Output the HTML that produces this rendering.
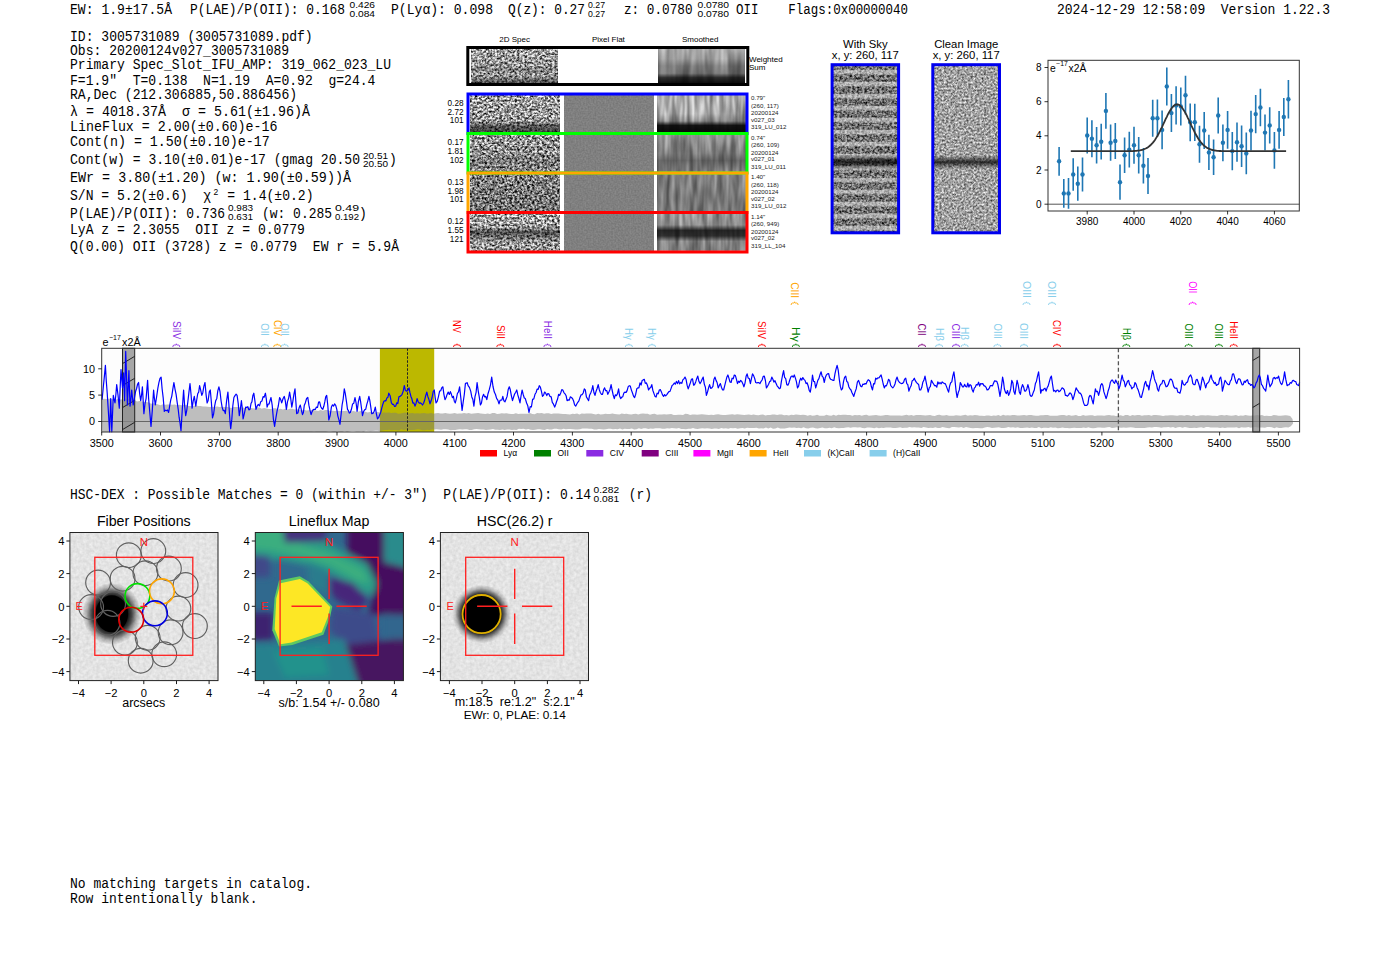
<!DOCTYPE html><html><head><meta charset="utf-8"><style>html,body{margin:0;padding:0;background:#fff;}svg{display:block}</style></head><body>
<svg width="1400" height="953" viewBox="0 0 1400 953">
<rect width="1400" height="953" fill="#fff"/>
<defs><filter id="nf0" x="0" y="0" width="1" height="1" color-interpolation-filters="sRGB"><feTurbulence type="fractalNoise" baseFrequency="0.4 0.45" numOctaves="3" seed="11"/><feColorMatrix type="matrix" values="1.8 0 0 0 -0.26 1.8 0 0 0 -0.26 1.8 0 0 0 -0.26 0 0 0 0 1"/></filter><linearGradient id="g0" x1="0" y1="0" x2="0" y2="1"><stop offset="0" stop-color="#000" stop-opacity="0"/><stop offset="0.5" stop-color="#000" stop-opacity="0.1"/><stop offset="0.6" stop-color="#000" stop-opacity="0.25"/><stop offset="0.75" stop-color="#000" stop-opacity="0.05"/><stop offset="0.85" stop-color="#000" stop-opacity="0.3"/><stop offset="1" stop-color="#000" stop-opacity="0.6"/></linearGradient><filter id="nf1" x="0" y="0" width="1" height="1" color-interpolation-filters="sRGB"><feTurbulence type="fractalNoise" baseFrequency="0.15 0.02" numOctaves="2" seed="5"/><feColorMatrix type="matrix" values="0.7 0 0 0 0.35 0.7 0 0 0 0.35 0.7 0 0 0 0.35 0 0 0 0 1"/></filter><linearGradient id="g1" x1="0" y1="0" x2="0" y2="1"><stop offset="0" stop-color="#000" stop-opacity="0.05"/><stop offset="0.3" stop-color="#000" stop-opacity="0.15"/><stop offset="0.5" stop-color="#000" stop-opacity="0.35"/><stop offset="0.7" stop-color="#000" stop-opacity="0.4"/><stop offset="0.82" stop-color="#000" stop-opacity="0.8"/><stop offset="1" stop-color="#000" stop-opacity="0.95"/></linearGradient><filter id="nf2" x="0" y="0" width="1" height="1" color-interpolation-filters="sRGB"><feTurbulence type="fractalNoise" baseFrequency="0.4 0.45" numOctaves="3" seed="20"/><feColorMatrix type="matrix" values="1.9 0 0 0 -0.33 1.9 0 0 0 -0.33 1.9 0 0 0 -0.33 0 0 0 0 1"/></filter><linearGradient id="g2" x1="0" y1="0" x2="0" y2="1"><stop offset="0" stop-color="#000" stop-opacity="0"/><stop offset="0.7" stop-color="#000" stop-opacity="0.05"/><stop offset="0.85" stop-color="#000" stop-opacity="0.5"/><stop offset="1" stop-color="#000" stop-opacity="0.6"/></linearGradient><filter id="nf3" x="0" y="0" width="1" height="1" color-interpolation-filters="sRGB"><feTurbulence type="fractalNoise" baseFrequency="0.6" numOctaves="1" seed="30"/><feColorMatrix type="matrix" values="0.15 0 0 0 0.425 0.15 0 0 0 0.425 0.15 0 0 0 0.425 0 0 0 0 1"/></filter><filter id="nf4" x="0" y="0" width="1" height="1" color-interpolation-filters="sRGB"><feTurbulence type="fractalNoise" baseFrequency="0.2 0.03" numOctaves="2" seed="40"/><feColorMatrix type="matrix" values="0.75 0 0 0 0.305 0.75 0 0 0 0.305 0.75 0 0 0 0.305 0 0 0 0 1"/></filter><linearGradient id="g3" x1="0" y1="0" x2="0" y2="1"><stop offset="0" stop-color="#000" stop-opacity="0.0"/><stop offset="0.5" stop-color="#000" stop-opacity="0.05"/><stop offset="0.7" stop-color="#000" stop-opacity="0.25"/><stop offset="0.82" stop-color="#000" stop-opacity="0.9"/><stop offset="1" stop-color="#000" stop-opacity="0.95"/></linearGradient><filter id="nf5" x="0" y="0" width="1" height="1" color-interpolation-filters="sRGB"><feTurbulence type="fractalNoise" baseFrequency="0.4 0.45" numOctaves="3" seed="21"/><feColorMatrix type="matrix" values="1.9 0 0 0 -0.37 1.9 0 0 0 -0.37 1.9 0 0 0 -0.37 0 0 0 0 1"/></filter><linearGradient id="g4" x1="0" y1="0" x2="0" y2="1"><stop offset="0" stop-color="#000" stop-opacity="0"/><stop offset="0.5" stop-color="#000" stop-opacity="0.05"/><stop offset="0.7" stop-color="#000" stop-opacity="0.2"/><stop offset="1" stop-color="#000" stop-opacity="0.1"/></linearGradient><filter id="nf6" x="0" y="0" width="1" height="1" color-interpolation-filters="sRGB"><feTurbulence type="fractalNoise" baseFrequency="0.6" numOctaves="1" seed="31"/><feColorMatrix type="matrix" values="0.15 0 0 0 0.425 0.15 0 0 0 0.425 0.15 0 0 0 0.425 0 0 0 0 1"/></filter><filter id="nf7" x="0" y="0" width="1" height="1" color-interpolation-filters="sRGB"><feTurbulence type="fractalNoise" baseFrequency="0.2 0.03" numOctaves="2" seed="41"/><feColorMatrix type="matrix" values="0.75 0 0 0 0.305 0.75 0 0 0 0.305 0.75 0 0 0 0.305 0 0 0 0 1"/></filter><linearGradient id="g5" x1="0" y1="0" x2="0" y2="1"><stop offset="0" stop-color="#000" stop-opacity="0.15"/><stop offset="0.5" stop-color="#000" stop-opacity="0.3"/><stop offset="0.7" stop-color="#000" stop-opacity="0.45"/><stop offset="1" stop-color="#000" stop-opacity="0.3"/></linearGradient><filter id="nf8" x="0" y="0" width="1" height="1" color-interpolation-filters="sRGB"><feTurbulence type="fractalNoise" baseFrequency="0.4 0.45" numOctaves="3" seed="22"/><feColorMatrix type="matrix" values="1.9 0 0 0 -0.4 1.9 0 0 0 -0.4 1.9 0 0 0 -0.4 0 0 0 0 1"/></filter><linearGradient id="g6" x1="0" y1="0" x2="0" y2="1"><stop offset="0" stop-color="#000" stop-opacity="0.1"/><stop offset="0.5" stop-color="#000" stop-opacity="0.15"/><stop offset="1" stop-color="#000" stop-opacity="0.2"/></linearGradient><filter id="nf9" x="0" y="0" width="1" height="1" color-interpolation-filters="sRGB"><feTurbulence type="fractalNoise" baseFrequency="0.6" numOctaves="1" seed="32"/><feColorMatrix type="matrix" values="0.15 0 0 0 0.425 0.15 0 0 0 0.425 0.15 0 0 0 0.425 0 0 0 0 1"/></filter><filter id="nf10" x="0" y="0" width="1" height="1" color-interpolation-filters="sRGB"><feTurbulence type="fractalNoise" baseFrequency="0.2 0.03" numOctaves="2" seed="42"/><feColorMatrix type="matrix" values="0.75 0 0 0 0.305 0.75 0 0 0 0.305 0.75 0 0 0 0.305 0 0 0 0 1"/></filter><linearGradient id="g7" x1="0" y1="0" x2="0" y2="1"><stop offset="0" stop-color="#000" stop-opacity="0.25"/><stop offset="0.5" stop-color="#000" stop-opacity="0.3"/><stop offset="1" stop-color="#000" stop-opacity="0.35"/></linearGradient><filter id="nf11" x="0" y="0" width="1" height="1" color-interpolation-filters="sRGB"><feTurbulence type="fractalNoise" baseFrequency="0.4 0.45" numOctaves="3" seed="23"/><feColorMatrix type="matrix" values="1.9 0 0 0 -0.31 1.9 0 0 0 -0.31 1.9 0 0 0 -0.31 0 0 0 0 1"/></filter><linearGradient id="g8" x1="0" y1="0" x2="0" y2="1"><stop offset="0" stop-color="#000" stop-opacity="0"/><stop offset="0.35" stop-color="#000" stop-opacity="0.05"/><stop offset="0.5" stop-color="#000" stop-opacity="0.55"/><stop offset="0.65" stop-color="#000" stop-opacity="0.3"/><stop offset="0.8" stop-color="#000" stop-opacity="0.05"/><stop offset="1" stop-color="#000" stop-opacity="0.1"/></linearGradient><filter id="nf12" x="0" y="0" width="1" height="1" color-interpolation-filters="sRGB"><feTurbulence type="fractalNoise" baseFrequency="0.6" numOctaves="1" seed="33"/><feColorMatrix type="matrix" values="0.15 0 0 0 0.425 0.15 0 0 0 0.425 0.15 0 0 0 0.425 0 0 0 0 1"/></filter><filter id="nf13" x="0" y="0" width="1" height="1" color-interpolation-filters="sRGB"><feTurbulence type="fractalNoise" baseFrequency="0.2 0.03" numOctaves="2" seed="43"/><feColorMatrix type="matrix" values="0.75 0 0 0 0.305 0.75 0 0 0 0.305 0.75 0 0 0 0.305 0 0 0 0 1"/></filter><linearGradient id="g9" x1="0" y1="0" x2="0" y2="1"><stop offset="0" stop-color="#000" stop-opacity="0.15"/><stop offset="0.3" stop-color="#000" stop-opacity="0.2"/><stop offset="0.45" stop-color="#000" stop-opacity="0.8"/><stop offset="0.6" stop-color="#000" stop-opacity="0.75"/><stop offset="0.75" stop-color="#000" stop-opacity="0.25"/><stop offset="1" stop-color="#000" stop-opacity="0.3"/></linearGradient><filter id="nf14" x="0" y="0" width="1" height="1" color-interpolation-filters="sRGB"><feTurbulence type="fractalNoise" baseFrequency="0.4 0.45" numOctaves="3" seed="51"/><feColorMatrix type="matrix" values="1.8 0 0 0 -0.26 1.8 0 0 0 -0.26 1.8 0 0 0 -0.26 0 0 0 0 1"/></filter><pattern id="stripes" x="0" y="57.75" width="66" height="12" patternUnits="userSpaceOnUse"><rect width="66" height="12" fill="#000" fill-opacity="0.32"/><rect y="0" width="66" height="4.5" fill="#fff" fill-opacity="0.45"/></pattern><linearGradient id="g10" x1="0" y1="0" x2="0" y2="1"><stop offset="0" stop-color="#000" stop-opacity="0"/><stop offset="0.535" stop-color="#000" stop-opacity="0"/><stop offset="0.58" stop-color="#000" stop-opacity="0.75"/><stop offset="0.625" stop-color="#000" stop-opacity="0"/><stop offset="1" stop-color="#000" stop-opacity="0"/></linearGradient><filter id="nf15" x="0" y="0" width="1" height="1" color-interpolation-filters="sRGB"><feTurbulence type="fractalNoise" baseFrequency="0.45 0.5" numOctaves="3" seed="52"/><feColorMatrix type="matrix" values="1.05 0 0 0 0.105 1.05 0 0 0 0.105 1.05 0 0 0 0.105 0 0 0 0 1"/></filter><linearGradient id="g11" x1="0" y1="0" x2="0" y2="1"><stop offset="0" stop-color="#000" stop-opacity="0"/><stop offset="0.54" stop-color="#000" stop-opacity="0"/><stop offset="0.58" stop-color="#000" stop-opacity="0.75"/><stop offset="0.62" stop-color="#000" stop-opacity="0"/><stop offset="1" stop-color="#000" stop-opacity="0"/></linearGradient><clipPath id="ax0"><rect x="69.9" y="532.5" width="148.1" height="148.1"/></clipPath><clipPath id="ax1"><rect x="255.3" y="532.5" width="148.1" height="148.1"/></clipPath><clipPath id="ax2"><rect x="440.4" y="532.5" width="148.1" height="148.1"/></clipPath><filter id="blur3" x="-50%" y="-50%" width="200%" height="200%"><feGaussianBlur stdDeviation="3"/></filter><filter id="blur6" x="-50%" y="-50%" width="200%" height="200%"><feGaussianBlur stdDeviation="6"/></filter><filter id="blur9" x="-50%" y="-50%" width="200%" height="200%"><feGaussianBlur stdDeviation="9"/></filter><radialGradient id="blob"><stop offset="0" stop-color="#000"/><stop offset="0.55" stop-color="#000"/><stop offset="0.7" stop-color="#000" stop-opacity="0.75"/><stop offset="0.85" stop-color="#000" stop-opacity="0.25"/><stop offset="1" stop-color="#000" stop-opacity="0"/></radialGradient><radialGradient id="halo1"><stop offset="0" stop-color="#000"/><stop offset="0.5" stop-color="#000"/><stop offset="0.68" stop-color="#000" stop-opacity="0.7"/><stop offset="0.85" stop-color="#000" stop-opacity="0.25"/><stop offset="1" stop-color="#000" stop-opacity="0"/></radialGradient><filter id="nf16" x="0" y="0" width="1" height="1" color-interpolation-filters="sRGB"><feTurbulence type="fractalNoise" baseFrequency="0.3" numOctaves="2" seed="61"/><feColorMatrix type="matrix" values="0.14 0 0 0 0.82 0.14 0 0 0 0.82 0.14 0 0 0 0.82 0 0 0 0 1"/></filter><radialGradient id="halo3"><stop offset="0" stop-color="#000"/><stop offset="0.62" stop-color="#000"/><stop offset="0.75" stop-color="#000" stop-opacity="0.6"/><stop offset="0.88" stop-color="#000" stop-opacity="0.2"/><stop offset="1" stop-color="#000" stop-opacity="0"/></radialGradient><filter id="nf17" x="0" y="0" width="1" height="1" color-interpolation-filters="sRGB"><feTurbulence type="fractalNoise" baseFrequency="0.3" numOctaves="2" seed="62"/><feColorMatrix type="matrix" values="0.14 0 0 0 0.82 0.14 0 0 0 0.82 0.14 0 0 0 0.82 0 0 0 0 1"/></filter></defs>
<text xml:space="preserve" x="70" y="14" font-family='"Liberation Mono", monospace' font-size="13.8" fill="#000" textLength="102" lengthAdjust="spacingAndGlyphs">EW: 1.9±17.5Å</text>
<text xml:space="preserve" x="190" y="14" font-family='"Liberation Mono", monospace' font-size="13.8" fill="#000" textLength="155" lengthAdjust="spacingAndGlyphs">P(LAE)/P(OII): 0.168</text>
<text xml:space="preserve" x="349.5" y="8.3" font-family='"Liberation Sans", sans-serif' font-size="8.5" fill="#000" textLength="25.5" lengthAdjust="spacingAndGlyphs" >0.426</text>
<text xml:space="preserve" x="349.5" y="17.2" font-family='"Liberation Sans", sans-serif' font-size="8.5" fill="#000" textLength="25.5" lengthAdjust="spacingAndGlyphs" >0.084</text>
<text xml:space="preserve" x="391" y="14" font-family='"Liberation Mono", monospace' font-size="13.8" fill="#000" textLength="102" lengthAdjust="spacingAndGlyphs">P(Lyα): 0.098</text>
<text xml:space="preserve" x="508" y="14" font-family='"Liberation Mono", monospace' font-size="13.8" fill="#000" textLength="77" lengthAdjust="spacingAndGlyphs">Q(z): 0.27</text>
<text xml:space="preserve" x="588" y="8.3" font-family='"Liberation Sans", sans-serif' font-size="8.5" fill="#000" textLength="17" lengthAdjust="spacingAndGlyphs" >0.27</text>
<text xml:space="preserve" x="588" y="17.2" font-family='"Liberation Sans", sans-serif' font-size="8.5" fill="#000" textLength="17" lengthAdjust="spacingAndGlyphs" >0.27</text>
<text xml:space="preserve" x="624" y="14" font-family='"Liberation Mono", monospace' font-size="13.8" fill="#000" textLength="68.5" lengthAdjust="spacingAndGlyphs">z: 0.0780</text>
<text xml:space="preserve" x="697.5" y="8.3" font-family='"Liberation Sans", sans-serif' font-size="8.5" fill="#000" textLength="31.5" lengthAdjust="spacingAndGlyphs" >0.0780</text>
<text xml:space="preserve" x="697.5" y="17.2" font-family='"Liberation Sans", sans-serif' font-size="8.5" fill="#000" textLength="31.5" lengthAdjust="spacingAndGlyphs" >0.0780</text>
<text xml:space="preserve" x="736" y="14" font-family='"Liberation Mono", monospace' font-size="13.8" fill="#000" textLength="172" lengthAdjust="spacingAndGlyphs">OII    Flags:0x00000040</text>
<text xml:space="preserve" x="1057" y="14" font-family='"Liberation Mono", monospace' font-size="13.8" fill="#000" textLength="273" lengthAdjust="spacingAndGlyphs">2024-12-29 12:58:09  Version 1.22.3</text>
<text xml:space="preserve" x="70" y="40.5" font-family='"Liberation Mono", monospace' font-size="13.8" fill="#000" textLength="242.7" lengthAdjust="spacingAndGlyphs">ID: 3005731089 (3005731089.pdf)</text>
<text xml:space="preserve" x="70" y="54.7" font-family='"Liberation Mono", monospace' font-size="13.8" fill="#000" textLength="219.2" lengthAdjust="spacingAndGlyphs">Obs: 20200124v027_3005731089</text>
<text xml:space="preserve" x="70" y="69.3" font-family='"Liberation Mono", monospace' font-size="13.8" fill="#000" textLength="321.0" lengthAdjust="spacingAndGlyphs">Primary Spec_Slot_IFU_AMP: 319_062_023_LU</text>
<text xml:space="preserve" x="70" y="84.5" font-family='"Liberation Mono", monospace' font-size="13.8" fill="#000" textLength="305.4" lengthAdjust="spacingAndGlyphs">F=1.9"  T=0.138  N=1.19  A=0.92  g=24.4</text>
<text xml:space="preserve" x="70" y="99.0" font-family='"Liberation Mono", monospace' font-size="13.8" fill="#000" textLength="227.1" lengthAdjust="spacingAndGlyphs">RA,Dec (212.306885,50.886456)</text>
<text xml:space="preserve" x="70" y="131.4" font-family='"Liberation Mono", monospace' font-size="13.8" fill="#000" textLength="207.5" lengthAdjust="spacingAndGlyphs">LineFlux = 2.00(±0.60)e-16</text>
<text xml:space="preserve" x="70" y="146.3" font-family='"Liberation Mono", monospace' font-size="13.8" fill="#000" textLength="199.7" lengthAdjust="spacingAndGlyphs">Cont(n) = 1.50(±0.10)e-17</text>
<text xml:space="preserve" x="70" y="234.2" font-family='"Liberation Mono", monospace' font-size="13.8" fill="#000" textLength="234.9" lengthAdjust="spacingAndGlyphs">LyA z = 2.3055  OII z = 0.0779</text>
<text xml:space="preserve" x="70" y="116.3" font-family='"Liberation Mono", monospace' font-size="13.8" fill="#000" textLength="240" lengthAdjust="spacingAndGlyphs">λ = 4018.37Å  σ = 5.61(±1.96)Å</text>
<text xml:space="preserve" x="70" y="164.3" font-family='"Liberation Mono", monospace' font-size="13.8" fill="#000" textLength="290" lengthAdjust="spacingAndGlyphs">Cont(w) = 3.10(±0.01)e-17 (gmag 20.50</text>
<text xml:space="preserve" x="363" y="158.5" font-family='"Liberation Sans", sans-serif' font-size="8.5" fill="#000" textLength="25" lengthAdjust="spacingAndGlyphs" >20.51</text>
<text xml:space="preserve" x="363" y="167.3" font-family='"Liberation Sans", sans-serif' font-size="8.5" fill="#000" textLength="25" lengthAdjust="spacingAndGlyphs" >20.50</text>
<text xml:space="preserve" x="389" y="164.3" font-family='"Liberation Mono", monospace' font-size="13.8" fill="#000" textLength="7.8" lengthAdjust="spacingAndGlyphs">)</text>
<text xml:space="preserve" x="70" y="182.3" font-family='"Liberation Mono", monospace' font-size="13.8" fill="#000" textLength="281" lengthAdjust="spacingAndGlyphs">EWr = 3.80(±1.20) (w: 1.90(±0.59))Å</text>
<text xml:space="preserve" x="70" y="199.8" font-family='"Liberation Mono", monospace' font-size="13.8" fill="#000" textLength="141" lengthAdjust="spacingAndGlyphs">S/N = 5.2(±0.6)  χ</text>
<text xml:space="preserve" x="213.5" y="194.5" font-family='"Liberation Sans", sans-serif' font-size="8.5" fill="#000" >2</text>
<text xml:space="preserve" x="219.5" y="199.8" font-family='"Liberation Mono", monospace' font-size="13.8" fill="#000" textLength="94" lengthAdjust="spacingAndGlyphs"> = 1.4(±0.2)</text>
<text xml:space="preserve" x="70" y="217.5" font-family='"Liberation Mono", monospace' font-size="13.8" fill="#000" textLength="155" lengthAdjust="spacingAndGlyphs">P(LAE)/P(OII): 0.736</text>
<text xml:space="preserve" x="228" y="211.3" font-family='"Liberation Sans", sans-serif' font-size="8.5" fill="#000" textLength="25" lengthAdjust="spacingAndGlyphs" >0.983</text>
<text xml:space="preserve" x="228" y="220.2" font-family='"Liberation Sans", sans-serif' font-size="8.5" fill="#000" textLength="25" lengthAdjust="spacingAndGlyphs" >0.631</text>
<text xml:space="preserve" x="262" y="217.5" font-family='"Liberation Mono", monospace' font-size="13.8" fill="#000" textLength="70" lengthAdjust="spacingAndGlyphs">(w: 0.285</text>
<text xml:space="preserve" x="335" y="211.3" font-family='"Liberation Sans", sans-serif' font-size="8.5" fill="#000" textLength="24" lengthAdjust="spacingAndGlyphs" >0.49</text>
<text xml:space="preserve" x="335" y="220.2" font-family='"Liberation Sans", sans-serif' font-size="8.5" fill="#000" textLength="24" lengthAdjust="spacingAndGlyphs" >0.192</text>
<text xml:space="preserve" x="359" y="217.5" font-family='"Liberation Mono", monospace' font-size="13.8" fill="#000" textLength="7.8" lengthAdjust="spacingAndGlyphs">)</text>
<text xml:space="preserve" x="70" y="251.2" font-family='"Liberation Mono", monospace' font-size="13.8" fill="#000" textLength="329" lengthAdjust="spacingAndGlyphs">Q(0.00) OII (3728) z = 0.0779  EW r = 5.9Å</text>
<text xml:space="preserve" x="514.6" y="42" font-family='"Liberation Sans", sans-serif' font-size="8" fill="#000" text-anchor="middle" >2D Spec</text>
<text xml:space="preserve" x="608.4" y="42" font-family='"Liberation Sans", sans-serif' font-size="8" fill="#000" text-anchor="middle" >Pixel Flat</text>
<text xml:space="preserve" x="700.2" y="42" font-family='"Liberation Sans", sans-serif' font-size="8" fill="#000" text-anchor="middle" >Smoothed</text>
<rect x="468" y="47.8" width="279" height="36.4" fill="#fff"/>
<rect x="471.5" y="47.8" width="86.5" height="36.4" fill="#888" filter="url(#nf0)"/>
<rect x="471.5" y="47.8" width="86.5" height="36.4" fill="url(#g0)"/>
<rect x="658" y="47.8" width="87" height="36.4" fill="#888" filter="url(#nf1)"/>
<rect x="658" y="47.8" width="87" height="36.4" fill="url(#g1)"/>
<rect x="467.8" y="47.5" width="280" height="37" fill="none" stroke="#000" stroke-width="3"/>
<text xml:space="preserve" x="749" y="61.5" font-family='"Liberation Sans", sans-serif' font-size="8" fill="#000" >Weighted</text>
<text xml:space="preserve" x="749" y="69.5" font-family='"Liberation Sans", sans-serif' font-size="8" fill="#000" >Sum</text>
<rect x="467" y="94.0" width="281" height="39.5" fill="#fff"/>
<rect x="470" y="95.5" width="90" height="36.5" fill="#888" filter="url(#nf2)"/>
<rect x="470" y="95.5" width="90" height="36.5" fill="url(#g2)"/>
<rect x="564" y="95.5" width="90" height="36.5" fill="#888" filter="url(#nf3)"/>
<rect x="657" y="95.5" width="89" height="36.5" fill="#888" filter="url(#nf4)"/>
<rect x="657" y="95.5" width="89" height="36.5" fill="url(#g3)"/>
<text xml:space="preserve" x="463.5" y="105.8" font-family='"Liberation Sans", sans-serif' font-size="8.2" fill="#000" text-anchor="end" >0.28</text>
<text xml:space="preserve" x="463.5" y="114.5" font-family='"Liberation Sans", sans-serif' font-size="8.2" fill="#000" text-anchor="end" >2.72</text>
<text xml:space="preserve" x="463.5" y="123.19999999999999" font-family='"Liberation Sans", sans-serif' font-size="8.2" fill="#000" text-anchor="end" >101</text>
<text xml:space="preserve" x="751" y="100.0" font-family='"Liberation Sans", sans-serif' font-size="6.2" fill="#222" >0.79"</text>
<text xml:space="preserve" x="751" y="107.5" font-family='"Liberation Sans", sans-serif' font-size="6.2" fill="#222" >(260, 117)</text>
<text xml:space="preserve" x="751" y="115.0" font-family='"Liberation Sans", sans-serif' font-size="6.2" fill="#222" >20200124</text>
<text xml:space="preserve" x="751" y="121.5" font-family='"Liberation Sans", sans-serif' font-size="6.2" fill="#222" >v027_03</text>
<text xml:space="preserve" x="751" y="129.0" font-family='"Liberation Sans", sans-serif' font-size="6.2" fill="#222" >319_LU_012</text>
<rect x="467" y="133.5" width="281" height="39.5" fill="#fff"/>
<rect x="470" y="135.0" width="90" height="36.5" fill="#888" filter="url(#nf5)"/>
<rect x="470" y="135.0" width="90" height="36.5" fill="url(#g4)"/>
<rect x="564" y="135.0" width="90" height="36.5" fill="#888" filter="url(#nf6)"/>
<rect x="657" y="135.0" width="89" height="36.5" fill="#888" filter="url(#nf7)"/>
<rect x="657" y="135.0" width="89" height="36.5" fill="url(#g5)"/>
<text xml:space="preserve" x="463.5" y="145.3" font-family='"Liberation Sans", sans-serif' font-size="8.2" fill="#000" text-anchor="end" >0.17</text>
<text xml:space="preserve" x="463.5" y="154.0" font-family='"Liberation Sans", sans-serif' font-size="8.2" fill="#000" text-anchor="end" >1.81</text>
<text xml:space="preserve" x="463.5" y="162.70000000000002" font-family='"Liberation Sans", sans-serif' font-size="8.2" fill="#000" text-anchor="end" >102</text>
<text xml:space="preserve" x="751" y="139.5" font-family='"Liberation Sans", sans-serif' font-size="6.2" fill="#222" >0.74"</text>
<text xml:space="preserve" x="751" y="147.0" font-family='"Liberation Sans", sans-serif' font-size="6.2" fill="#222" >(260, 109)</text>
<text xml:space="preserve" x="751" y="154.5" font-family='"Liberation Sans", sans-serif' font-size="6.2" fill="#222" >20200124</text>
<text xml:space="preserve" x="751" y="161.0" font-family='"Liberation Sans", sans-serif' font-size="6.2" fill="#222" >v027_01</text>
<text xml:space="preserve" x="751" y="168.5" font-family='"Liberation Sans", sans-serif' font-size="6.2" fill="#222" >319_LU_011</text>
<rect x="467" y="173.0" width="281" height="39.5" fill="#fff"/>
<rect x="470" y="174.5" width="90" height="36.5" fill="#888" filter="url(#nf8)"/>
<rect x="470" y="174.5" width="90" height="36.5" fill="url(#g6)"/>
<rect x="564" y="174.5" width="90" height="36.5" fill="#888" filter="url(#nf9)"/>
<rect x="657" y="174.5" width="89" height="36.5" fill="#888" filter="url(#nf10)"/>
<rect x="657" y="174.5" width="89" height="36.5" fill="url(#g7)"/>
<text xml:space="preserve" x="463.5" y="184.8" font-family='"Liberation Sans", sans-serif' font-size="8.2" fill="#000" text-anchor="end" >0.13</text>
<text xml:space="preserve" x="463.5" y="193.5" font-family='"Liberation Sans", sans-serif' font-size="8.2" fill="#000" text-anchor="end" >1.98</text>
<text xml:space="preserve" x="463.5" y="202.20000000000002" font-family='"Liberation Sans", sans-serif' font-size="8.2" fill="#000" text-anchor="end" >101</text>
<text xml:space="preserve" x="751" y="179.0" font-family='"Liberation Sans", sans-serif' font-size="6.2" fill="#222" >1.40"</text>
<text xml:space="preserve" x="751" y="186.5" font-family='"Liberation Sans", sans-serif' font-size="6.2" fill="#222" >(260, 118)</text>
<text xml:space="preserve" x="751" y="194.0" font-family='"Liberation Sans", sans-serif' font-size="6.2" fill="#222" >20200124</text>
<text xml:space="preserve" x="751" y="200.5" font-family='"Liberation Sans", sans-serif' font-size="6.2" fill="#222" >v027_02</text>
<text xml:space="preserve" x="751" y="208.0" font-family='"Liberation Sans", sans-serif' font-size="6.2" fill="#222" >319_LU_012</text>
<rect x="467" y="212.5" width="281" height="39.5" fill="#fff"/>
<rect x="470" y="214.0" width="90" height="36.5" fill="#888" filter="url(#nf11)"/>
<rect x="470" y="214.0" width="90" height="36.5" fill="url(#g8)"/>
<rect x="564" y="214.0" width="90" height="36.5" fill="#888" filter="url(#nf12)"/>
<rect x="657" y="214.0" width="89" height="36.5" fill="#888" filter="url(#nf13)"/>
<rect x="657" y="214.0" width="89" height="36.5" fill="url(#g9)"/>
<text xml:space="preserve" x="463.5" y="224.3" font-family='"Liberation Sans", sans-serif' font-size="8.2" fill="#000" text-anchor="end" >0.12</text>
<text xml:space="preserve" x="463.5" y="233.0" font-family='"Liberation Sans", sans-serif' font-size="8.2" fill="#000" text-anchor="end" >1.55</text>
<text xml:space="preserve" x="463.5" y="241.70000000000002" font-family='"Liberation Sans", sans-serif' font-size="8.2" fill="#000" text-anchor="end" >121</text>
<text xml:space="preserve" x="751" y="218.5" font-family='"Liberation Sans", sans-serif' font-size="6.2" fill="#222" >1.14"</text>
<text xml:space="preserve" x="751" y="226.0" font-family='"Liberation Sans", sans-serif' font-size="6.2" fill="#222" >(260, 949)</text>
<text xml:space="preserve" x="751" y="233.5" font-family='"Liberation Sans", sans-serif' font-size="6.2" fill="#222" >20200124</text>
<text xml:space="preserve" x="751" y="240.0" font-family='"Liberation Sans", sans-serif' font-size="6.2" fill="#222" >v027_02</text>
<text xml:space="preserve" x="751" y="247.5" font-family='"Liberation Sans", sans-serif' font-size="6.2" fill="#222" >319_LL_104</text>
<rect x="468" y="94.0" width="279" height="39.5" fill="none" stroke="#0000ff" stroke-width="3"/>
<rect x="468" y="133.5" width="279" height="39.5" fill="none" stroke="#00ff00" stroke-width="3"/>
<rect x="468" y="173.0" width="279" height="39.5" fill="none" stroke="#ffa500" stroke-width="3"/>
<rect x="468" y="212.5" width="279" height="39.5" fill="none" stroke="#ff0000" stroke-width="3"/>
<text xml:space="preserve" x="865.3" y="47.6" font-family='"Liberation Sans", sans-serif' font-size="11.3" fill="#000" text-anchor="middle" >With Sky</text>
<text xml:space="preserve" x="865.3" y="58.5" font-family='"Liberation Sans", sans-serif' font-size="11.3" fill="#000" text-anchor="middle" >x, y: 260, 117</text>
<text xml:space="preserve" x="966.2" y="47.6" font-family='"Liberation Sans", sans-serif' font-size="11.3" fill="#000" text-anchor="middle" >Clean Image</text>
<text xml:space="preserve" x="966.2" y="58.5" font-family='"Liberation Sans", sans-serif' font-size="11.3" fill="#000" text-anchor="middle" >x, y: 260, 117</text>
<rect x="832" y="64.7" width="66.5" height="168" fill="#888" filter="url(#nf14)"/>
<rect x="832" y="64.7" width="66.5" height="168" fill="url(#stripes)"/>
<rect x="832" y="64.7" width="66.5" height="168" fill="url(#g10)"/>
<rect x="832.1" y="64.7" width="66.5" height="168.1" fill="none" stroke="#0000ee" stroke-width="3"/>
<rect x="933" y="64.7" width="66.5" height="168" fill="#888" filter="url(#nf15)"/>
<rect x="933" y="64.7" width="66.5" height="168" fill="url(#g11)"/>
<rect x="932.8" y="64.7" width="66.7" height="168.1" fill="none" stroke="#0000ee" stroke-width="3"/>
<rect x="1048" y="60.3" width="251.29999999999995" height="150.7" fill="#fff"/>
<line x1="1048" y1="204.2" x2="1299.3" y2="204.2" stroke="#555" stroke-width="1"/>
<path d="M1059.1 146.9V175.7M1063.8 179.1V207.8M1068.5 178.1V208.8M1073.2 158.2V190.7M1077.8 166.6V200.8M1082.5 157.4V191.6M1087.2 117.6V153.4M1091.9 120.3V157.2M1096.6 127.1V163.4M1101.2 123.7V159.6M1105.9 93.1V128.7M1110.6 124.6V160.8M1115.3 123.0V158.9M1120.0 164.6V199.8M1124.6 137.4V172.9M1129.3 131.7V167.6M1134.0 126.8V163.7M1138.7 136.9V173.4M1143.4 148.0V183.5M1148.0 157.9V194.1M1152.7 99.8V136.7M1157.4 99.6V136.9M1162.1 110.4V149.3M1166.8 67.5V105.4M1171.4 94.1V132.1M1176.1 86.3V124.6M1180.8 87.5V125.4M1185.5 75.7V114.6M1190.2 103.4V141.3M1194.8 103.7V141.0M1199.5 125.8V162.7M1204.2 112.1V149.0M1208.9 134.8V170.0M1213.6 139.4V175.0M1218.2 97.4V133.6M1222.9 124.4V161.3M1227.6 111.1V148.7M1232.3 131.9V170.2M1237.0 122.5V161.8M1241.6 125.6V166.9M1246.3 132.6V174.3M1251.0 110.7V150.4M1255.7 95.0V133.3M1260.4 88.7V126.3M1265.0 114.6V150.5M1269.7 107.3V143.5M1274.4 131.9V168.8M1279.1 110.9V148.8M1283.8 98.1V136.0M1288.4 80.0V118.6" stroke="#1f77b4" stroke-width="1.6" fill="none"/>
<circle cx="1059.1" cy="161.3" r="2.2" fill="#1f77b4"/><circle cx="1063.8" cy="193.4" r="2.2" fill="#1f77b4"/><circle cx="1068.5" cy="193.4" r="2.2" fill="#1f77b4"/><circle cx="1073.2" cy="174.5" r="2.2" fill="#1f77b4"/><circle cx="1077.8" cy="183.7" r="2.2" fill="#1f77b4"/><circle cx="1082.5" cy="174.5" r="2.2" fill="#1f77b4"/><circle cx="1087.2" cy="135.5" r="2.2" fill="#1f77b4"/><circle cx="1091.9" cy="138.7" r="2.2" fill="#1f77b4"/><circle cx="1096.6" cy="145.2" r="2.2" fill="#1f77b4"/><circle cx="1101.2" cy="141.7" r="2.2" fill="#1f77b4"/><circle cx="1105.9" cy="110.9" r="2.2" fill="#1f77b4"/><circle cx="1110.6" cy="142.7" r="2.2" fill="#1f77b4"/><circle cx="1115.3" cy="141.0" r="2.2" fill="#1f77b4"/><circle cx="1120.0" cy="182.2" r="2.2" fill="#1f77b4"/><circle cx="1124.6" cy="155.2" r="2.2" fill="#1f77b4"/><circle cx="1129.3" cy="149.7" r="2.2" fill="#1f77b4"/><circle cx="1134.0" cy="145.2" r="2.2" fill="#1f77b4"/><circle cx="1138.7" cy="155.2" r="2.2" fill="#1f77b4"/><circle cx="1143.4" cy="165.7" r="2.2" fill="#1f77b4"/><circle cx="1148.0" cy="176.0" r="2.2" fill="#1f77b4"/><circle cx="1152.7" cy="118.2" r="2.2" fill="#1f77b4"/><circle cx="1157.4" cy="118.2" r="2.2" fill="#1f77b4"/><circle cx="1162.1" cy="129.9" r="2.2" fill="#1f77b4"/><circle cx="1166.8" cy="86.4" r="2.2" fill="#1f77b4"/><circle cx="1171.4" cy="113.1" r="2.2" fill="#1f77b4"/><circle cx="1176.1" cy="105.4" r="2.2" fill="#1f77b4"/><circle cx="1180.8" cy="106.4" r="2.2" fill="#1f77b4"/><circle cx="1185.5" cy="95.2" r="2.2" fill="#1f77b4"/><circle cx="1190.2" cy="122.3" r="2.2" fill="#1f77b4"/><circle cx="1194.8" cy="122.3" r="2.2" fill="#1f77b4"/><circle cx="1199.5" cy="144.2" r="2.2" fill="#1f77b4"/><circle cx="1204.2" cy="130.5" r="2.2" fill="#1f77b4"/><circle cx="1208.9" cy="152.4" r="2.2" fill="#1f77b4"/><circle cx="1213.6" cy="157.2" r="2.2" fill="#1f77b4"/><circle cx="1218.2" cy="115.5" r="2.2" fill="#1f77b4"/><circle cx="1222.9" cy="142.8" r="2.2" fill="#1f77b4"/><circle cx="1227.6" cy="129.9" r="2.2" fill="#1f77b4"/><circle cx="1232.3" cy="151.1" r="2.2" fill="#1f77b4"/><circle cx="1237.0" cy="142.2" r="2.2" fill="#1f77b4"/><circle cx="1241.6" cy="146.3" r="2.2" fill="#1f77b4"/><circle cx="1246.3" cy="153.4" r="2.2" fill="#1f77b4"/><circle cx="1251.0" cy="130.5" r="2.2" fill="#1f77b4"/><circle cx="1255.7" cy="114.1" r="2.2" fill="#1f77b4"/><circle cx="1260.4" cy="107.5" r="2.2" fill="#1f77b4"/><circle cx="1265.0" cy="132.6" r="2.2" fill="#1f77b4"/><circle cx="1269.7" cy="125.4" r="2.2" fill="#1f77b4"/><circle cx="1274.4" cy="150.4" r="2.2" fill="#1f77b4"/><circle cx="1279.1" cy="129.9" r="2.2" fill="#1f77b4"/><circle cx="1283.8" cy="117.0" r="2.2" fill="#1f77b4"/><circle cx="1288.4" cy="99.3" r="2.2" fill="#1f77b4"/>
<polyline points="1070.8,151.2 1072.0,151.2 1073.2,151.2 1074.3,151.2 1075.5,151.2 1076.7,151.2 1077.8,151.2 1079.0,151.2 1080.2,151.2 1081.3,151.2 1082.5,151.2 1083.7,151.2 1084.9,151.2 1086.0,151.2 1087.2,151.2 1088.4,151.2 1089.5,151.2 1090.7,151.2 1091.9,151.2 1093.0,151.2 1094.2,151.2 1095.4,151.2 1096.6,151.2 1097.7,151.2 1098.9,151.2 1100.1,151.2 1101.2,151.2 1102.4,151.2 1103.6,151.2 1104.8,151.2 1105.9,151.2 1107.1,151.2 1108.3,151.2 1109.4,151.2 1110.6,151.2 1111.8,151.2 1112.9,151.2 1114.1,151.2 1115.3,151.2 1116.5,151.2 1117.6,151.2 1118.8,151.2 1120.0,151.2 1121.1,151.2 1122.3,151.2 1123.5,151.2 1124.6,151.2 1125.8,151.2 1127.0,151.2 1128.2,151.2 1129.3,151.2 1130.5,151.1 1131.7,151.1 1132.8,151.1 1134.0,151.0 1135.2,150.9 1136.3,150.8 1137.5,150.7 1138.7,150.6 1139.8,150.4 1141.0,150.1 1142.2,149.8 1143.4,149.5 1144.5,149.0 1145.7,148.5 1146.9,147.9 1148.0,147.2 1149.2,146.3 1150.4,145.3 1151.5,144.1 1152.7,142.8 1153.9,141.4 1155.1,139.7 1156.2,137.9 1157.4,136.0 1158.6,133.8 1159.7,131.6 1160.9,129.2 1162.1,126.8 1163.2,124.3 1164.4,121.8 1165.6,119.2 1166.8,116.8 1167.9,114.4 1169.1,112.3 1170.3,110.3 1171.4,108.5 1172.6,107.0 1173.8,105.8 1175.0,105.0 1176.1,104.5 1177.3,104.4 1178.5,104.7 1179.6,105.3 1180.8,106.3 1182.0,107.6 1183.1,109.2 1184.3,111.0 1185.5,113.1 1186.7,115.4 1187.8,117.8 1189.0,120.2 1190.2,122.8 1191.3,125.3 1192.5,127.8 1193.7,130.2 1194.8,132.5 1196.0,134.7 1197.2,136.8 1198.3,138.7 1199.5,140.4 1200.7,142.0 1201.9,143.4 1203.0,144.6 1204.2,145.7 1205.4,146.6 1206.5,147.5 1207.7,148.2 1208.9,148.7 1210.0,149.2 1211.2,149.6 1212.4,150.0 1213.6,150.2 1214.7,150.5 1215.9,150.6 1217.1,150.8 1218.2,150.9 1219.4,151.0 1220.6,151.0 1221.8,151.1 1222.9,151.1 1224.1,151.1 1225.3,151.2 1226.4,151.2 1227.6,151.2 1228.8,151.2 1229.9,151.2 1231.1,151.2 1232.3,151.2 1233.5,151.2 1234.6,151.2 1235.8,151.2 1237.0,151.2 1238.1,151.2 1239.3,151.2 1240.5,151.2 1241.6,151.2 1242.8,151.2 1244.0,151.2 1245.2,151.2 1246.3,151.2 1247.5,151.2 1248.7,151.2 1249.8,151.2 1251.0,151.2 1252.2,151.2 1253.3,151.2 1254.5,151.2 1255.7,151.2 1256.8,151.2 1258.0,151.2 1259.2,151.2 1260.4,151.2 1261.5,151.2 1262.7,151.2 1263.9,151.2 1265.0,151.2 1266.2,151.2 1267.4,151.2 1268.5,151.2 1269.7,151.2 1270.9,151.2 1272.1,151.2 1273.2,151.2 1274.4,151.2 1275.6,151.2 1276.7,151.2 1277.9,151.2 1279.1,151.2 1280.2,151.2 1281.4,151.2 1282.6,151.2 1283.8,151.2 1284.9,151.2 1286.1,151.2" stroke="#333" stroke-width="1.8" fill="none"/>
<rect x="1048" y="60.3" width="251.29999999999995" height="150.7" fill="none" stroke="#333" stroke-width="1"/>
<text xml:space="preserve" x="1041.5" y="207.7" font-family='"Liberation Sans", sans-serif' font-size="10" fill="#000" text-anchor="end" >0</text>
<text xml:space="preserve" x="1041.5" y="173.51999999999998" font-family='"Liberation Sans", sans-serif' font-size="10" fill="#000" text-anchor="end" >2</text>
<text xml:space="preserve" x="1041.5" y="139.33999999999997" font-family='"Liberation Sans", sans-serif' font-size="10" fill="#000" text-anchor="end" >4</text>
<text xml:space="preserve" x="1041.5" y="105.16" font-family='"Liberation Sans", sans-serif' font-size="10" fill="#000" text-anchor="end" >6</text>
<text xml:space="preserve" x="1041.5" y="70.97999999999999" font-family='"Liberation Sans", sans-serif' font-size="10" fill="#000" text-anchor="end" >8</text>
<text xml:space="preserve" x="1087.2" y="224.5" font-family='"Liberation Sans", sans-serif' font-size="10" fill="#000" text-anchor="middle" >3980</text>
<text xml:space="preserve" x="1134.0" y="224.5" font-family='"Liberation Sans", sans-serif' font-size="10" fill="#000" text-anchor="middle" >4000</text>
<text xml:space="preserve" x="1180.8" y="224.5" font-family='"Liberation Sans", sans-serif' font-size="10" fill="#000" text-anchor="middle" >4020</text>
<text xml:space="preserve" x="1227.6" y="224.5" font-family='"Liberation Sans", sans-serif' font-size="10" fill="#000" text-anchor="middle" >4040</text>
<text xml:space="preserve" x="1274.4" y="224.5" font-family='"Liberation Sans", sans-serif' font-size="10" fill="#000" text-anchor="middle" >4060</text>
<path d="M1048 204.2h-3.5M1048 170.0h-3.5M1048 135.8h-3.5M1048 101.7h-3.5M1048 67.5h-3.5M1087.2 211v3.5M1134.0 211v3.5M1180.8 211v3.5M1227.6 211v3.5M1274.4 211v3.5" stroke="#000" stroke-width="0.8"/>
<text xml:space="preserve" x="1050" y="72" font-family='"Liberation Sans", sans-serif' font-size="10.3" fill="#000" >e</text>
<text xml:space="preserve" x="1056.3" y="66.3" font-family='"Liberation Sans", sans-serif' font-size="6.8" fill="#000" >−17</text>
<text xml:space="preserve" x="1068.5" y="72" font-family='"Liberation Sans", sans-serif' font-size="10.3" fill="#000" >x2Å</text>
<rect x="101.7" y="348.3" width="1197.8999999999999" height="83.69999999999999" fill="#fdfdfd"/>
<rect x="379.9" y="348.3" width="54.3" height="83.69999999999999" fill="#bcb800"/>
<polygon points="101.7,399.2 104.1,398.8 106.4,399.1 108.8,398.8 111.1,398.8 113.5,399.6 115.8,399.7 118.2,398.7 120.5,399.5 122.9,399.6 125.2,398.6 127.6,399.3 129.9,398.9 132.3,399.7 134.6,400.1 137.0,401.4 139.4,401.1 141.7,401.2 144.1,402.0 146.4,402.1 148.8,402.6 151.1,403.7 153.5,403.2 155.8,403.8 158.2,404.5 160.5,405.2 162.9,404.2 165.2,404.8 167.6,404.5 169.9,404.4 172.3,404.7 174.7,404.5 177.0,405.2 179.4,404.8 181.7,405.3 184.1,404.7 186.4,404.9 188.8,405.9 191.1,406.0 193.5,406.0 195.8,405.2 198.2,406.0 200.5,405.9 202.9,406.5 205.2,406.4 207.6,406.7 210.0,406.9 212.3,406.7 214.7,406.9 217.0,406.6 219.4,407.0 221.7,406.8 224.1,406.9 226.4,406.8 228.8,407.2 231.1,407.9 233.5,407.1 235.8,407.0 238.2,407.1 240.6,407.6 242.9,407.4 245.3,408.1 247.6,407.4 250.0,407.7 252.3,408.2 254.7,408.6 257.0,407.6 259.4,407.6 261.7,408.8 264.1,408.0 266.4,408.5 268.8,409.0 271.1,408.9 273.5,408.3 275.9,408.3 278.2,409.4 280.6,408.8 282.9,409.6 285.3,408.8 287.6,409.4 290.0,408.8 292.3,408.8 294.7,409.4 297.0,408.9 299.4,409.9 301.7,410.2 304.1,409.7 306.4,410.5 308.8,410.3 311.2,410.1 313.5,410.0 315.9,410.6 318.2,410.9 320.6,409.9 322.9,410.7 325.3,410.0 327.6,410.1 330.0,410.9 332.3,410.8 334.7,410.9 337.0,410.8 339.4,410.9 341.7,411.0 344.1,411.0 346.5,410.7 348.8,411.3 351.2,411.4 353.5,411.1 355.9,411.8 358.2,411.8 360.6,411.0 362.9,411.6 365.3,411.7 367.6,412.4 370.0,412.0 372.3,411.9 374.7,412.7 377.0,412.1 379.4,412.2 381.8,413.0 384.1,412.4 386.5,412.7 388.8,412.5 391.2,413.0 393.5,412.7 395.9,412.8 398.2,413.7 400.6,413.6 402.9,412.9 405.3,412.5 407.6,413.4 410.0,413.2 412.3,413.0 414.7,413.4 417.1,413.3 419.4,413.4 421.8,413.3 424.1,413.1 426.5,413.5 428.8,413.4 431.2,412.9 433.5,413.8 435.9,413.2 438.2,413.0 440.6,413.5 442.9,413.6 445.3,412.9 447.6,413.6 450.0,413.7 452.4,413.4 454.7,413.1 457.1,413.8 459.4,413.6 461.8,413.6 464.1,413.0 466.5,413.5 468.8,412.9 471.2,413.8 473.5,413.6 475.9,413.2 478.2,413.0 480.6,413.5 483.0,413.8 485.3,413.9 487.7,413.4 490.0,413.9 492.4,413.1 494.7,413.1 497.1,413.9 499.4,413.8 501.8,413.2 504.1,413.4 506.5,413.2 508.8,413.8 511.2,414.1 513.5,413.9 515.9,413.2 518.3,413.9 520.6,413.8 523.0,413.7 525.3,413.7 527.7,413.8 530.0,413.1 532.4,414.1 534.7,414.3 537.1,413.1 539.4,413.2 541.8,413.1 544.1,413.8 546.5,413.2 548.8,413.2 551.2,414.1 553.6,413.5 555.9,413.4 558.3,413.6 560.6,413.8 563.0,414.1 565.3,414.0 567.7,414.2 570.0,414.4 572.4,413.7 574.7,414.1 577.1,413.5 579.4,414.5 581.8,413.4 584.1,413.7 586.5,413.4 588.9,413.4 591.2,413.4 593.6,413.9 595.9,414.6 598.3,413.7 600.6,414.4 603.0,414.2 605.3,413.8 607.7,414.0 610.0,414.1 612.4,413.5 614.7,413.9 617.1,414.3 619.4,414.4 621.8,413.6 624.2,414.1 626.5,413.7 628.9,414.3 631.2,414.5 633.6,414.1 635.9,413.7 638.3,414.6 640.6,413.8 643.0,413.6 645.3,413.8 647.7,413.8 650.0,414.8 652.4,414.1 654.7,413.8 657.1,414.8 659.5,414.5 661.8,414.6 664.2,414.2 666.5,414.4 668.9,414.3 671.2,414.0 673.6,414.9 675.9,414.9 678.3,414.8 680.6,414.8 683.0,414.9 685.3,413.8 687.7,413.9 690.1,414.9 692.4,414.4 694.8,414.6 697.1,414.7 699.5,414.6 701.8,414.3 704.2,414.4 706.5,414.7 708.9,414.9 711.2,414.7 713.6,415.0 715.9,414.5 718.3,414.3 720.6,414.7 723.0,415.1 725.4,415.0 727.7,414.8 730.1,414.5 732.4,414.3 734.8,414.8 737.1,414.3 739.5,414.6 741.8,414.8 744.2,414.9 746.5,414.8 748.9,414.5 751.2,414.9 753.6,414.6 755.9,414.9 758.3,415.2 760.7,414.8 763.0,414.6 765.4,415.4 767.7,415.0 770.1,415.0 772.4,414.5 774.8,414.4 777.1,415.1 779.5,414.5 781.8,414.6 784.2,415.3 786.5,415.1 788.9,415.5 791.2,414.7 793.6,414.9 796.0,414.6 798.3,414.7 800.7,414.9 803.0,414.8 805.4,415.1 807.7,415.7 810.1,415.1 812.4,415.8 814.8,415.6 817.1,414.8 819.5,415.8 821.8,415.7 824.2,415.7 826.5,414.7 828.9,415.6 831.3,415.8 833.6,414.8 836.0,415.7 838.3,414.8 840.7,415.0 843.0,414.8 845.4,414.7 847.7,415.1 850.1,414.9 852.4,415.8 854.8,414.9 857.1,415.2 859.5,415.0 861.8,415.8 864.2,414.9 866.6,414.7 868.9,415.8 871.3,415.5 873.6,415.2 876.0,414.9 878.3,415.6 880.7,415.7 883.0,415.6 885.4,415.1 887.7,415.0 890.1,415.4 892.4,415.5 894.8,415.4 897.1,415.5 899.5,415.4 901.9,415.8 904.2,415.3 906.6,414.7 908.9,415.4 911.3,415.0 913.6,415.8 916.0,415.1 918.3,415.0 920.7,415.1 923.0,415.3 925.4,415.4 927.7,415.2 930.1,414.9 932.5,415.8 934.8,415.9 937.2,415.1 939.5,414.8 941.9,415.4 944.2,415.5 946.6,415.1 948.9,415.8 951.3,415.7 953.6,415.8 956.0,415.3 958.3,415.6 960.7,415.7 963.0,415.2 965.4,414.8 967.8,415.7 970.1,415.2 972.5,415.5 974.8,415.0 977.2,415.3 979.5,415.7 981.9,415.8 984.2,416.0 986.6,415.5 988.9,415.6 991.3,415.9 993.6,415.6 996.0,415.7 998.3,415.1 1000.7,415.9 1003.1,414.8 1005.4,415.5 1007.8,415.3 1010.1,415.5 1012.5,415.0 1014.8,415.0 1017.2,415.4 1019.5,415.5 1021.9,415.2 1024.2,415.0 1026.6,415.6 1028.9,415.1 1031.3,414.9 1033.6,415.5 1036.0,415.8 1038.4,415.8 1040.7,415.2 1043.1,415.2 1045.4,414.9 1047.8,415.0 1050.1,415.8 1052.5,415.8 1054.8,415.7 1057.2,415.8 1059.5,415.2 1061.9,415.0 1064.2,414.9 1066.6,415.7 1068.9,415.0 1071.3,415.7 1073.7,415.5 1076.0,415.1 1078.4,416.0 1080.7,416.0 1083.1,415.0 1085.4,415.7 1087.8,415.6 1090.1,415.3 1092.5,415.2 1094.8,416.1 1097.2,415.6 1099.5,415.5 1101.9,415.5 1104.2,415.8 1106.6,415.3 1109.0,414.9 1111.3,415.6 1113.7,415.4 1116.0,415.9 1118.4,415.7 1120.7,415.2 1123.1,415.9 1125.4,414.9 1127.8,414.9 1130.1,415.9 1132.5,414.9 1134.8,415.6 1137.2,415.1 1139.5,415.1 1141.9,415.7 1144.3,415.2 1146.6,415.2 1149.0,415.1 1151.3,415.7 1153.7,415.1 1156.0,414.9 1158.4,415.2 1160.7,415.4 1163.1,415.9 1165.4,415.4 1167.8,415.6 1170.1,415.2 1172.5,415.2 1174.9,415.4 1177.2,415.8 1179.6,415.3 1181.9,415.3 1184.3,415.8 1186.6,414.9 1189.0,415.2 1191.3,415.9 1193.7,414.9 1196.0,415.9 1198.4,415.7 1200.7,415.2 1203.1,415.3 1205.4,415.4 1207.8,415.3 1210.2,415.5 1212.5,415.7 1214.9,415.8 1217.2,416.0 1219.6,415.2 1221.9,415.1 1224.3,415.4 1226.6,415.1 1229.0,415.6 1231.3,415.7 1233.7,415.6 1236.0,415.0 1238.4,416.0 1240.7,415.4 1243.1,415.8 1245.5,415.1 1247.8,415.6 1250.2,415.7 1252.5,415.6 1254.9,415.4 1257.2,415.1 1259.6,415.6 1261.9,415.0 1264.3,415.9 1266.6,415.7 1269.0,415.9 1271.3,415.9 1273.7,415.1 1276.0,415.2 1278.4,415.8 1280.8,415.8 1283.1,415.5 1285.5,415.3 1287.8,415.5 1290.2,415.9 1292.5,419.1 1293.1,423.5 1290.8,426.2 1288.4,427.4 1286.0,427.3 1283.7,427.5 1281.3,427.9 1279.0,427.9 1276.6,427.2 1274.3,428.2 1271.9,427.2 1269.6,427.1 1267.2,427.0 1264.9,427.7 1262.5,427.5 1260.2,427.5 1257.8,427.4 1255.5,427.0 1253.1,427.3 1250.7,427.8 1248.4,427.1 1246.0,427.6 1243.7,427.4 1241.3,427.3 1239.0,428.2 1236.6,427.2 1234.3,427.4 1231.9,427.6 1229.6,427.5 1227.2,427.6 1224.9,427.9 1222.5,427.5 1220.2,428.1 1217.8,427.6 1215.4,427.4 1213.1,427.6 1210.7,427.5 1208.4,427.0 1206.0,427.1 1203.7,428.0 1201.3,427.2 1199.0,427.4 1196.6,428.1 1194.3,427.7 1191.9,427.9 1189.6,428.1 1187.2,427.5 1184.9,427.0 1182.5,427.8 1180.1,427.1 1177.8,427.3 1175.4,428.0 1173.1,427.1 1170.7,427.4 1168.4,427.0 1166.0,427.3 1163.7,427.3 1161.3,427.8 1159.0,427.2 1156.6,427.0 1154.3,427.1 1151.9,427.6 1149.6,427.2 1147.2,427.6 1144.8,428.1 1142.5,428.1 1140.1,428.1 1137.8,427.9 1135.4,428.0 1133.1,427.6 1130.7,427.3 1128.4,427.5 1126.0,427.7 1123.7,427.4 1121.3,427.8 1119.0,427.6 1116.6,427.2 1114.3,427.7 1111.9,428.0 1109.5,427.1 1107.2,427.3 1104.8,427.7 1102.5,427.7 1100.1,427.5 1097.8,427.4 1095.4,427.9 1093.1,428.2 1090.7,427.9 1088.4,427.2 1086.0,428.0 1083.7,427.6 1081.3,427.9 1078.9,427.9 1076.6,428.0 1074.2,427.7 1071.9,428.0 1069.5,428.2 1067.2,428.1 1064.8,428.0 1062.5,427.6 1060.1,428.1 1057.8,428.2 1055.4,427.6 1053.1,427.7 1050.7,427.3 1048.4,428.1 1046.0,427.7 1043.6,427.7 1041.3,428.2 1038.9,427.0 1036.6,427.9 1034.2,428.1 1031.9,427.6 1029.5,428.0 1027.2,427.4 1024.8,427.8 1022.5,428.0 1020.1,428.1 1017.8,427.3 1015.4,427.8 1013.1,427.2 1010.7,427.6 1008.3,427.0 1006.0,427.8 1003.6,427.9 1001.3,427.9 998.9,427.2 996.6,427.4 994.2,427.8 991.9,428.1 989.5,427.3 987.2,427.0 984.8,427.4 982.5,428.2 980.1,428.2 977.8,428.1 975.4,428.0 973.0,428.2 970.7,428.1 968.3,427.4 966.0,427.1 963.6,428.0 961.3,427.0 958.9,427.6 956.6,427.2 954.2,427.1 951.9,427.1 949.5,428.2 947.2,427.9 944.8,427.5 942.5,427.1 940.1,428.1 937.7,427.9 935.4,427.2 933.0,428.1 930.7,427.8 928.3,427.9 926.0,427.4 923.6,427.1 921.3,428.1 918.9,427.4 916.6,427.4 914.2,427.2 911.9,427.6 909.5,427.1 907.2,427.8 904.8,427.8 902.4,428.0 900.1,427.3 897.7,427.7 895.4,428.0 893.0,428.1 890.7,427.4 888.3,427.6 886.0,427.4 883.6,427.9 881.3,427.7 878.9,428.2 876.6,427.5 874.2,428.3 871.9,427.8 869.5,427.4 867.1,427.5 864.8,428.2 862.4,428.1 860.1,427.3 857.7,427.6 855.4,427.3 853.0,427.3 850.7,427.8 848.3,427.3 846.0,427.5 843.6,428.0 841.3,427.9 838.9,428.3 836.5,427.9 834.2,427.2 831.8,428.3 829.5,427.7 827.1,428.3 824.8,428.3 822.4,427.6 820.1,428.1 817.7,428.4 815.4,428.3 813.0,427.6 810.7,427.7 808.3,428.4 806.0,428.2 803.6,427.3 801.2,428.2 798.9,427.8 796.5,428.0 794.2,427.6 791.8,427.8 789.5,427.6 787.1,427.9 784.8,428.4 782.4,428.4 780.1,428.5 777.7,427.6 775.4,428.5 773.0,428.7 770.7,427.5 768.3,428.5 765.9,427.6 763.6,428.6 761.2,428.2 758.9,428.5 756.5,427.8 754.2,428.0 751.8,428.0 749.5,427.9 747.1,427.8 744.8,428.4 742.4,428.1 740.1,428.3 737.7,428.8 735.4,427.9 733.0,428.2 730.6,427.9 728.3,428.7 725.9,428.3 723.6,428.4 721.2,428.1 718.9,429.0 716.5,428.6 714.2,428.5 711.8,429.0 709.5,428.4 707.1,428.2 704.8,428.6 702.4,428.3 700.1,428.4 697.7,428.9 695.3,428.8 693.0,428.0 690.6,428.8 688.3,428.7 685.9,429.2 683.6,429.0 681.2,429.1 678.9,428.1 676.5,428.4 674.2,428.2 671.8,428.1 669.5,428.6 667.1,428.2 664.8,428.7 662.4,428.8 660.0,428.2 657.7,428.2 655.3,428.2 653.0,428.8 650.6,428.4 648.3,428.9 645.9,428.2 643.6,428.3 641.2,429.1 638.9,428.3 636.5,429.3 634.2,429.4 631.8,428.6 629.4,429.1 627.1,428.9 624.7,428.7 622.4,429.5 620.0,428.6 617.7,429.2 615.3,429.0 613.0,429.2 610.6,428.7 608.3,428.7 605.9,429.3 603.6,429.5 601.2,429.3 598.9,429.1 596.5,429.6 594.1,429.5 591.8,428.7 589.4,428.8 587.1,428.5 584.7,428.5 582.4,428.6 580.0,429.3 577.7,429.5 575.3,429.4 573.0,429.2 570.6,429.1 568.3,429.1 565.9,429.3 563.6,428.7 561.2,429.5 558.8,429.2 556.5,428.7 554.1,428.8 551.8,429.5 549.4,429.6 547.1,428.9 544.7,429.9 542.4,429.7 540.0,429.2 537.7,429.3 535.3,429.7 533.0,429.9 530.6,429.7 528.3,429.0 525.9,429.4 523.5,428.8 521.2,429.0 518.8,428.8 516.5,430.0 514.1,429.8 511.8,430.0 509.4,429.5 507.1,429.6 504.7,430.0 502.4,429.4 500.0,430.0 497.7,429.7 495.3,429.8 493.0,429.1 490.6,429.6 488.2,429.8 485.9,430.1 483.5,429.6 481.2,429.4 478.8,429.3 476.5,429.0 474.1,429.2 471.8,429.9 469.4,430.1 467.1,429.3 464.7,429.3 462.4,429.6 460.0,429.2 457.7,429.6 455.3,429.9 452.9,430.1 450.6,430.3 448.2,429.5 445.9,429.2 443.5,429.2 441.2,429.8 438.8,429.5 436.5,429.2 434.1,429.4 431.8,429.6 429.4,429.9 427.1,429.8 424.7,430.2 422.4,430.2 420.0,429.6 417.6,429.2 415.3,429.8 412.9,430.0 410.6,430.1 408.2,429.9 405.9,429.5 403.5,430.0 401.2,429.3 398.8,430.4 396.5,430.2 394.1,430.0 391.8,430.2 389.4,429.8 387.0,429.9 384.7,429.9 382.3,430.4 380.0,431.2 377.6,430.7 375.3,430.8 372.9,431.0 370.6,431.3 368.2,430.9 365.9,430.7 363.5,431.8 361.2,431.2 358.8,431.6 356.5,431.5 354.1,431.0 351.7,431.0 349.4,431.5 347.0,432.0 344.7,431.2 342.3,432.0 340.0,432.0 337.6,431.5 335.3,432.0 332.9,432.0 330.6,431.5 328.2,431.5 325.9,432.0 323.5,432.0 321.2,432.0 318.8,432.0 316.4,432.0 314.1,431.8 311.7,432.0 309.4,432.0 307.0,432.0 304.7,432.0 302.3,432.0 300.0,432.0 297.6,432.0 295.3,432.0 292.9,432.0 290.6,432.0 288.2,432.0 285.9,432.0 283.5,432.0 281.1,432.0 278.8,432.0 276.4,432.0 274.1,432.0 271.7,432.0 269.4,432.0 267.0,432.0 264.7,432.0 262.3,432.0 260.0,432.0 257.6,432.0 255.3,432.0 252.9,432.0 250.6,432.0 248.2,432.0 245.8,432.0 243.5,432.0 241.1,432.0 238.8,432.0 236.4,432.0 234.1,432.0 231.7,432.0 229.4,432.0 227.0,432.0 224.7,432.0 222.3,432.0 220.0,432.0 217.6,432.0 215.3,432.0 212.9,432.0 210.5,432.0 208.2,432.0 205.8,432.0 203.5,432.0 201.1,432.0 198.8,432.0 196.4,432.0 194.1,432.0 191.7,432.0 189.4,432.0 187.0,432.0 184.7,432.0 182.3,432.0 180.0,432.0 177.6,432.0 175.2,432.0 172.9,432.0 170.5,432.0 168.2,432.0 165.8,432.0 163.5,432.0 161.1,432.0 158.8,432.0 156.4,432.0 154.1,432.0 151.7,432.0 149.4,432.0 147.0,432.0 144.6,432.0 142.3,432.0 139.9,432.0 137.6,432.0 135.2,432.0 132.9,432.0 130.5,432.0 128.2,432.0 125.8,432.0 123.5,432.0 121.1,432.0 118.8,432.0 116.4,432.0 114.1,432.0 111.7,432.0 109.3,432.0 107.0,432.0 104.6,432.0 102.3,432.0" fill="#7a7a7a" fill-opacity="0.48"/>
<line x1="101.7" y1="421.5" x2="1299.6" y2="421.5" stroke="#666" stroke-width="1"/>
<rect x="122.5" y="348.3" width="12.199999999999989" height="83.69999999999999" fill="#888" fill-opacity="0.75" stroke="#222" stroke-width="1"/>
<path d="M122.5 363.6L134.7 356.3M122.5 385.6L134.7 378.3M122.5 407.6L134.7 400.3M122.5 429.6L134.7 422.3" stroke="#222" stroke-width="1"/>
<rect x="1252.8" y="348.3" width="6.900000000000091" height="83.69999999999999" fill="#888" fill-opacity="0.75" stroke="#222" stroke-width="1"/>
<path d="M1252.8 360.4L1259.7 356.3M1252.8 407.4L1259.7 403.3" stroke="#222" stroke-width="1"/>
<line x1="407.5" y1="348.3" x2="407.5" y2="432" stroke="#222" stroke-width="1" stroke-dasharray="2.5,1.5"/>
<line x1="1118.4" y1="348.3" x2="1118.4" y2="432" stroke="#555" stroke-width="1.3" stroke-dasharray="4,2.5"/>
<polyline points="102.1,399.6 103.2,388.0 104.3,377.1 105.4,365.4 106.3,381.3 107.2,393.0 108.1,407.1 109.6,431.8 110.7,398.6 111.8,431.8 113.3,395.4 114.1,399.1 115.0,402.9 115.9,394.2 116.7,384.6 118.0,394.9 119.3,408.2 120.1,389.0 121.0,369.6 122.5,387.9 123.6,372.9 124.6,400.7 125.7,351.4 126.6,378.8 127.4,405.0 128.9,370.7 130.0,406.1 130.9,399.4 131.7,390.0 133.2,405.0 134.7,396.4 135.7,391.0 136.6,388.5 137.6,384.0 138.6,382.5 139.6,393.1 140.7,400.7 141.6,394.7 142.4,386.8 143.9,413.6 145.0,403.9 146.1,398.6 147.6,380.4 148.6,398.2 149.7,411.4 151.0,426.4 152.3,410.4 153.6,390.0 154.4,398.2 155.3,405.0 156.6,397.0 157.9,387.9 158.9,382.6 160.0,378.4 161.1,377.1 162.1,388.7 163.2,397.9 164.3,411.4 165.4,410.2 166.4,410.7 167.5,410.0 168.6,412.5 169.6,406.3 170.7,400.2 171.8,396.1 172.9,388.6 173.9,382.5 175.0,389.1 176.1,394.3 177.1,401.8 178.2,409.3 179.1,417.2 180.1,423.4 181.0,430.7 182.3,409.3 183.6,390.0 184.6,405.2 185.7,415.7 186.8,410.1 187.9,401.3 188.9,392.6 190.0,383.6 191.1,395.0 192.1,408.2 193.2,401.0 194.3,396.4 195.8,406.1 196.7,400.0 197.7,393.8 198.7,392.1 199.6,385.7 200.7,390.1 201.8,395.4 202.8,392.7 203.9,386.2 205.0,382.5 206.1,394.9 207.1,402.9 208.2,400.2 209.3,391.9 210.3,390.0 211.4,402.5 212.5,417.9 213.6,414.1 214.6,406.3 215.7,400.7 216.8,398.4 217.8,390.9 218.9,386.8 220.0,391.5 221.1,401.0 222.1,407.1 223.2,410.6 224.3,410.3 225.3,413.6 226.6,400.9 227.9,392.1 228.8,403.5 229.8,418.7 230.7,428.6 231.8,419.4 232.8,406.0 233.9,397.5 235.0,395.6 236.1,394.2 237.1,395.4 238.2,403.4 239.3,415.7 240.3,409.6 241.4,400.7 242.3,408.3 243.1,418.9 244.4,413.3 245.7,407.1 246.8,407.4 247.8,406.7 248.9,409.9 250.0,409.3 251.0,403.5 251.9,401.9 252.9,395.4 253.8,393.2 254.9,400.9 256.0,409.3 257.2,406.0 258.3,404.4 259.5,405.9 260.7,401.8 261.9,401.1 263.1,396.6 264.2,397.2 265.4,393.2 266.3,398.8 267.1,407.1 268.1,404.2 269.1,404.0 270.0,400.6 271.0,397.5 272.2,405.2 273.4,419.1 274.6,426.4 275.9,417.8 277.1,410.8 278.3,406.0 279.6,397.5 280.6,399.4 281.7,402.9 283.0,398.7 284.3,396.4 285.3,400.8 286.4,409.3 287.5,401.6 288.6,398.3 289.6,392.1 290.7,398.4 291.8,407.1 292.8,401.6 293.9,394.4 295.0,388.9 295.8,401.0 296.7,413.6 297.9,412.9 299.1,407.8 300.3,405.0 301.4,410.2 302.5,414.6 303.4,412.5 304.3,405.3 305.3,402.9 306.6,398.5 307.8,397.5 308.9,405.2 310.0,410.4 311.1,414.6 312.1,411.6 313.2,409.6 314.3,409.3 315.3,409.4 316.4,407.1 317.5,407.5 318.6,402.1 319.6,401.8 320.7,406.4 321.8,408.6 322.8,409.3 323.8,406.3 324.8,401.9 325.7,396.9 326.7,395.4 327.8,405.5 328.8,420.0 330.1,415.8 331.4,407.1 332.5,404.8 333.6,406.0 334.6,403.9 335.7,405.4 336.8,409.3 337.8,415.8 338.9,419.7 340.0,424.3 341.1,414.4 342.1,405.0 343.2,398.8 344.3,388.9 345.3,393.6 346.4,401.2 347.5,409.3 348.4,410.6 349.3,413.1 350.3,412.5 351.4,409.3 352.6,403.9 353.8,403.2 355.0,397.5 356.1,403.0 357.1,411.4 358.4,401.6 359.7,396.4 360.6,401.7 361.6,409.0 362.5,415.7 363.6,411.5 364.6,409.9 365.7,409.3 366.8,404.4 367.8,401.1 368.9,396.4 369.8,400.4 370.8,407.2 371.7,413.6 372.9,413.3 374.1,411.6 375.3,407.1 376.4,413.8 377.5,418.9 378.6,417.7 379.6,415.0 380.7,412.5 381.8,407.8 382.8,404.4 383.9,401.3 385.0,400.7 385.9,400.8 386.9,397.9 387.9,397.3 388.8,393.2 390.1,395.7 391.4,402.9 392.5,404.3 393.6,404.4 394.6,406.4 395.7,406.1 396.8,402.8 397.8,403.6 398.9,396.8 400.0,396.4 401.1,395.6 402.1,394.3 403.2,391.1 404.3,385.7 405.4,390.3 406.4,391.1 407.7,390.6 409.0,387.9 409.9,392.4 410.9,396.4 411.8,398.6 412.9,403.1 413.9,402.9 415.0,406.1 416.1,403.2 417.1,398.6 418.2,401.9 419.3,403.2 420.4,402.9 421.4,403.5 422.5,405.0 423.6,403.2 424.6,400.3 425.7,395.7 426.8,392.1 427.9,396.7 428.9,399.4 430.0,403.9 431.1,400.8 432.1,397.5 433.2,391.5 434.3,390.0 435.1,397.1 436.0,402.9 437.2,401.3 438.4,396.8 439.6,391.1 440.7,390.7 441.8,387.7 442.9,386.8 443.9,394.3 445.0,399.6 446.1,397.5 447.1,394.4 448.2,392.1 449.3,394.5 450.4,391.6 451.4,394.3 452.4,397.6 453.4,396.3 454.3,401.2 455.3,402.9 456.4,398.7 457.4,393.5 458.5,391.8 459.6,386.8 460.9,398.6 462.1,410.4 463.2,402.0 464.3,394.5 465.4,383.6 466.3,383.1 467.2,382.7 468.1,385.7 469.4,387.4 470.7,391.1 471.8,396.9 472.9,399.6 473.9,406.1 475.0,396.6 476.1,392.3 477.1,382.5 478.2,390.8 479.3,397.2 480.4,405.0 481.4,403.3 482.5,397.0 483.6,394.3 484.6,396.9 485.7,396.4 486.8,399.6 488.0,393.7 489.2,389.9 490.5,384.8 491.7,377.1 493.0,386.5 494.3,392.1 495.5,394.5 496.6,398.4 497.8,400.1 499.0,403.9 500.0,400.3 500.9,400.2 501.9,399.9 502.8,396.4 503.9,400.8 505.0,401.8 506.1,399.0 507.1,396.4 508.2,389.5 509.3,386.8 510.3,389.8 511.4,395.8 512.5,400.7 513.6,397.0 514.6,394.0 515.7,392.3 516.8,390.0 517.8,394.9 518.9,398.5 520.0,402.9 521.1,395.5 522.1,390.0 523.2,394.5 524.3,398.0 525.3,398.6 526.6,403.0 527.8,405.8 529.0,412.5 530.2,406.6 531.4,407.0 532.6,399.4 533.8,398.9 535.0,394.3 536.1,392.5 537.1,389.1 538.2,389.3 539.3,385.7 540.3,387.0 541.4,391.1 542.5,396.4 543.6,395.1 544.6,392.0 545.7,393.2 546.8,395.6 547.8,393.6 548.9,393.9 550.0,396.4 551.2,396.9 552.3,402.4 553.5,404.2 554.7,407.1 555.7,404.5 556.6,401.5 557.6,399.0 558.6,394.3 559.6,395.4 560.7,393.0 561.8,389.6 562.8,390.0 563.9,392.6 565.0,393.8 566.1,395.7 567.1,400.7 568.2,399.8 569.3,400.1 570.3,396.8 571.4,397.5 572.5,398.5 573.6,401.0 574.6,404.9 575.7,406.1 576.8,404.0 577.8,402.3 578.9,400.9 580.0,397.5 581.1,394.8 582.1,394.6 583.2,393.0 584.3,388.9 585.3,389.9 586.4,396.9 587.5,398.8 588.6,400.7 589.6,395.2 590.7,393.0 591.8,390.1 592.8,385.7 593.9,392.5 595.0,395.4 596.1,391.2 597.1,388.5 598.2,384.6 599.3,389.7 600.3,392.5 601.4,394.3 602.5,394.3 603.6,389.8 604.6,387.9 605.7,390.7 606.8,390.7 607.8,394.3 608.9,392.1 610.0,389.4 611.1,384.6 612.1,390.0 613.2,395.0 614.3,398.6 615.3,394.8 616.4,395.7 617.5,393.6 618.6,388.9 619.6,396.0 620.7,398.6 621.8,397.1 622.8,396.7 623.9,392.9 625.0,392.1 626.1,392.5 627.1,390.6 628.2,386.6 629.3,385.7 630.3,386.1 631.4,390.1 632.5,393.0 633.6,396.4 634.6,397.5 635.7,394.2 636.8,388.8 637.8,387.9 638.9,387.9 640.0,382.9 641.1,385.0 642.1,380.6 643.2,379.9 644.3,379.3 645.3,383.3 646.4,382.9 647.5,385.6 648.6,390.0 649.6,388.3 650.7,387.5 651.8,384.6 652.8,390.2 653.9,393.4 655.0,396.4 656.1,397.0 657.1,393.2 658.2,393.8 659.3,390.0 660.3,389.6 661.4,391.9 662.5,394.9 663.6,396.4 664.6,394.6 665.7,395.9 666.8,394.7 667.8,393.2 668.9,391.6 670.0,391.4 671.1,388.4 672.1,385.5 673.2,384.6 674.3,383.0 675.3,384.2 676.4,381.4 677.5,383.6 678.6,380.6 679.6,383.9 680.7,382.5 681.8,383.4 682.8,379.9 683.9,378.8 685.0,377.1 686.1,379.6 687.1,385.2 688.2,388.9 689.3,385.7 690.3,383.0 691.4,379.3 692.5,378.8 693.6,385.1 694.6,384.6 695.7,381.9 696.8,378.4 697.8,376.1 698.9,381.3 700.0,383.6 701.1,381.7 702.1,379.2 703.2,377.1 704.3,384.1 705.4,387.2 706.4,395.4 707.5,392.0 708.6,387.8 709.6,384.6 710.7,388.4 711.8,387.9 712.9,386.3 713.9,379.6 715.0,377.1 716.1,380.6 717.1,382.5 718.2,387.9 719.3,385.4 720.4,383.6 721.4,387.2 722.5,389.8 723.6,390.0 724.6,386.1 725.7,381.6 726.8,377.3 727.9,375.0 728.9,378.1 730.0,382.0 731.1,382.5 732.1,378.2 733.2,378.8 734.3,375.0 735.4,375.6 736.4,379.2 737.5,383.6 738.6,381.2 739.6,382.3 740.7,380.4 741.8,381.6 742.9,383.9 743.9,386.8 745.0,383.1 746.1,376.3 747.1,373.9 748.2,378.2 749.3,378.5 750.4,383.6 751.4,378.8 752.5,373.9 753.6,375.6 754.6,378.2 755.7,382.5 756.8,382.9 757.9,382.7 758.9,382.7 760.0,383.6 761.1,381.3 762.1,380.0 763.2,376.3 764.3,376.1 765.4,380.5 766.4,387.9 767.5,386.3 768.6,384.2 769.6,381.6 770.7,381.0 771.8,377.1 772.9,379.3 773.9,382.1 775.0,380.7 776.1,383.6 777.1,385.8 778.2,387.2 779.3,388.7 780.4,387.9 781.4,381.3 782.5,375.5 783.6,370.7 784.6,377.4 785.7,378.6 786.8,384.6 787.9,385.2 788.9,382.9 790.0,379.3 791.1,376.5 792.1,375.9 793.2,377.2 794.3,375.0 795.4,378.1 796.4,381.6 797.5,387.9 798.6,386.2 799.6,381.0 800.7,378.2 801.8,380.1 802.8,377.5 803.9,379.4 805.0,380.4 806.1,383.6 807.1,382.8 808.2,386.0 809.3,390.7 810.3,392.1 811.4,385.5 812.5,375.0 813.6,381.5 814.6,381.7 815.7,387.9 816.8,384.1 817.8,380.4 818.9,378.7 820.0,374.7 821.1,371.8 822.1,376.2 823.2,377.4 824.3,382.5 825.3,377.6 826.4,374.9 827.5,373.9 828.6,373.5 829.6,377.7 830.7,379.3 831.8,379.7 832.8,380.3 833.9,380.4 835.0,373.7 836.1,368.8 837.1,365.4 838.2,370.1 839.3,379.3 840.3,386.2 841.4,390.0 842.5,388.6 843.6,381.1 844.6,377.4 845.7,376.1 846.8,381.5 847.8,382.3 848.9,387.0 850.0,388.9 851.0,390.0 851.9,392.5 852.9,394.6 853.8,396.4 855.0,392.1 856.2,388.9 857.4,382.0 858.6,380.4 859.6,383.5 860.7,386.3 861.8,386.8 862.8,384.2 863.9,384.4 865.0,383.6 866.1,383.9 867.1,381.5 868.2,379.7 869.3,380.4 870.3,382.0 871.4,386.8 872.5,390.0 873.6,383.7 874.6,384.0 875.7,378.2 876.8,379.0 877.8,377.9 878.9,378.0 880.0,376.3 881.1,375.0 882.1,378.8 883.2,384.0 884.3,387.9 885.3,385.7 886.4,385.9 887.5,382.9 888.6,379.3 889.6,380.3 890.7,385.5 891.8,386.9 892.8,387.9 893.9,386.5 895.0,384.0 896.1,379.4 897.1,377.1 898.2,380.7 899.3,382.2 900.3,382.9 901.4,383.6 902.5,383.5 903.6,382.2 904.6,379.1 905.7,378.2 906.8,383.6 907.8,384.7 908.9,391.1 910.0,387.7 911.1,385.8 912.1,381.0 913.2,380.1 914.3,378.2 915.3,380.7 916.4,382.4 917.5,383.6 918.6,384.4 919.6,390.0 920.7,390.0 921.8,387.3 922.8,382.3 923.9,380.3 925.0,376.1 926.1,381.8 927.1,386.9 928.2,392.1 929.3,387.7 930.3,386.7 931.4,380.4 932.5,382.4 933.6,384.0 934.6,385.6 935.7,385.7 936.8,387.2 937.8,381.8 938.9,383.9 940.0,382.5 941.1,383.9 942.1,381.9 943.2,382.8 944.3,383.6 945.3,383.6 946.4,386.4 947.5,389.4 948.6,392.1 949.6,386.1 950.7,382.8 951.8,381.9 952.8,376.1 953.9,371.8 955.0,380.4 956.1,391.2 957.1,397.5 958.2,392.8 959.3,389.9 960.3,382.5 961.4,384.6 962.5,386.8 963.6,386.8 964.6,384.4 965.7,386.5 966.8,387.0 967.8,383.2 968.9,387.1 970.0,384.6 971.1,385.5 972.1,389.5 973.2,392.1 974.3,388.1 975.3,387.1 976.4,384.6 977.5,385.0 978.6,382.2 979.6,386.2 980.7,383.5 981.8,383.9 982.8,383.6 983.9,385.6 985.0,386.1 986.1,387.4 987.1,390.0 988.2,389.7 989.3,388.1 990.3,385.7 991.4,385.7 992.5,385.9 993.6,383.0 994.6,380.8 995.7,381.1 996.8,381.4 997.8,384.2 998.9,389.8 1000.0,396.4 1001.3,388.0 1002.6,377.1 1003.5,381.6 1004.4,389.0 1005.4,392.1 1006.4,393.6 1007.5,390.5 1008.6,395.3 1009.6,393.2 1010.7,388.9 1011.8,380.4 1012.9,382.9 1013.9,391.6 1015.0,394.3 1016.1,387.0 1017.1,380.4 1018.2,384.9 1019.3,391.9 1020.4,394.3 1021.4,388.2 1022.5,384.6 1023.6,386.9 1024.6,391.0 1025.7,391.1 1026.8,388.9 1027.9,384.6 1028.9,388.4 1030.0,394.8 1031.1,396.4 1032.1,395.8 1033.2,392.6 1034.3,390.0 1035.4,383.6 1036.4,381.5 1037.5,376.1 1038.6,371.8 1039.6,381.1 1040.7,393.2 1041.8,389.6 1042.9,390.5 1043.9,388.9 1045.0,388.2 1046.1,391.1 1047.1,387.8 1048.2,385.9 1049.3,381.9 1050.4,377.9 1051.4,376.1 1052.5,384.0 1053.6,391.1 1054.6,390.4 1055.7,391.9 1056.8,390.4 1057.9,390.0 1058.9,391.8 1060.0,391.1 1061.1,389.5 1062.1,387.9 1063.2,388.5 1064.3,389.8 1065.4,395.4 1066.4,395.4 1067.5,396.2 1068.6,394.9 1069.6,393.1 1070.7,393.2 1071.8,395.3 1072.9,399.6 1073.9,396.6 1075.0,392.1 1076.1,387.9 1077.1,389.6 1078.2,391.2 1079.3,393.1 1080.4,393.2 1081.4,394.9 1082.5,398.4 1083.6,402.9 1084.6,405.4 1085.7,405.4 1086.8,405.5 1087.9,403.9 1088.9,397.4 1090.0,395.4 1091.1,396.1 1092.1,400.0 1093.2,403.9 1094.3,396.1 1095.4,388.9 1096.4,391.7 1097.5,391.3 1098.6,395.4 1099.6,391.6 1100.7,385.4 1101.8,383.6 1102.8,385.3 1103.9,391.9 1105.0,395.1 1106.1,398.6 1107.1,395.6 1108.2,390.7 1109.3,387.5 1110.3,382.6 1111.4,380.4 1112.5,380.0 1113.6,382.4 1114.6,383.3 1115.7,380.0 1116.8,382.5 1117.8,383.9 1118.9,388.9 1120.0,385.8 1121.1,380.2 1122.1,375.0 1123.2,380.2 1124.3,381.5 1125.3,386.8 1126.4,384.3 1127.5,381.3 1128.6,380.4 1129.6,384.7 1130.7,385.4 1131.8,388.9 1132.8,387.5 1133.9,387.0 1135.0,382.5 1136.1,384.2 1137.1,387.7 1138.2,390.0 1139.3,393.7 1140.3,397.0 1141.4,397.5 1142.5,393.1 1143.6,388.8 1144.6,383.5 1145.7,381.4 1146.8,386.1 1147.8,385.1 1148.9,390.0 1150.1,381.6 1151.3,377.4 1152.6,370.7 1153.5,374.2 1154.4,378.7 1155.3,381.4 1156.4,383.7 1157.5,389.2 1158.6,391.1 1159.6,386.4 1160.7,384.3 1161.8,383.8 1162.8,380.4 1163.9,380.5 1165.0,383.7 1166.1,386.8 1167.1,386.4 1168.2,384.7 1169.3,381.2 1170.3,379.1 1171.4,379.3 1172.5,381.5 1173.6,386.1 1174.6,387.9 1175.7,388.3 1176.8,388.2 1177.8,392.1 1178.9,392.5 1180.0,393.2 1181.1,388.8 1182.1,380.4 1183.2,383.9 1184.3,385.2 1185.3,384.6 1186.4,382.4 1187.5,382.2 1188.6,377.9 1189.6,376.1 1190.7,375.0 1191.8,377.7 1192.8,383.5 1193.9,384.6 1195.0,384.7 1196.1,379.9 1197.1,379.3 1198.2,382.2 1199.3,385.8 1200.3,390.0 1201.4,382.9 1202.5,377.1 1203.6,380.2 1204.6,383.7 1205.7,387.9 1206.8,383.8 1207.8,383.0 1208.9,381.6 1210.0,377.8 1211.1,375.0 1212.1,379.5 1213.2,381.0 1214.3,383.6 1215.3,382.4 1216.4,385.5 1217.5,384.6 1218.6,384.0 1219.6,378.6 1220.7,377.1 1221.6,381.8 1222.4,391.1 1223.7,385.8 1225.0,380.4 1226.1,382.0 1227.1,383.5 1228.2,384.6 1229.3,384.7 1230.3,381.1 1231.4,379.7 1232.5,374.0 1233.6,373.9 1234.6,377.4 1235.7,381.7 1236.8,383.6 1237.8,380.1 1238.9,378.7 1240.0,379.3 1241.1,382.2 1242.1,384.8 1243.2,384.6 1244.3,381.2 1245.3,382.4 1246.4,380.4 1247.5,379.7 1248.6,383.7 1249.6,383.6 1250.7,385.4 1251.8,384.5 1252.8,385.4 1253.9,387.9 1255.0,386.6 1256.1,382.8 1257.1,381.4 1258.2,377.1 1259.3,375.0 1260.3,377.8 1261.4,384.4 1262.5,385.7 1263.6,388.3 1264.6,389.3 1265.7,391.1 1266.8,383.2 1267.8,375.0 1268.9,382.0 1270.0,386.8 1271.1,384.9 1272.1,383.1 1273.2,378.2 1274.3,377.4 1275.3,378.9 1276.4,377.7 1277.5,378.2 1278.6,376.1 1279.6,380.4 1280.7,383.4 1281.8,384.6 1282.7,382.2 1283.6,378.3 1284.6,371.8 1285.8,379.4 1287.1,385.7 1288.2,384.8 1289.3,384.6 1290.3,382.5 1291.4,383.2 1292.5,380.7 1293.6,380.4 1294.6,381.4 1295.7,381.5 1296.8,384.6 1297.7,385.1 1298.6,385.6 1299.6,382.5" stroke="#0000ff" stroke-width="1.2" fill="none" stroke-linejoin="round"/>
<rect x="101.7" y="348.3" width="1197.8999999999999" height="83.69999999999999" fill="none" stroke="#333" stroke-width="1"/>
<text xml:space="preserve" x="95" y="425.3" font-family='"Liberation Sans", sans-serif' font-size="10.8" fill="#000" text-anchor="end" >0</text>
<text xml:space="preserve" x="95" y="398.95" font-family='"Liberation Sans", sans-serif' font-size="10.8" fill="#000" text-anchor="end" >5</text>
<text xml:space="preserve" x="95" y="372.6" font-family='"Liberation Sans", sans-serif' font-size="10.8" fill="#000" text-anchor="end" >10</text>
<text xml:space="preserve" x="101.7" y="447" font-family='"Liberation Sans", sans-serif' font-size="10.8" fill="#000" text-anchor="middle" >3500</text>
<text xml:space="preserve" x="160.535" y="447" font-family='"Liberation Sans", sans-serif' font-size="10.8" fill="#000" text-anchor="middle" >3600</text>
<text xml:space="preserve" x="219.37" y="447" font-family='"Liberation Sans", sans-serif' font-size="10.8" fill="#000" text-anchor="middle" >3700</text>
<text xml:space="preserve" x="278.20500000000004" y="447" font-family='"Liberation Sans", sans-serif' font-size="10.8" fill="#000" text-anchor="middle" >3800</text>
<text xml:space="preserve" x="337.04" y="447" font-family='"Liberation Sans", sans-serif' font-size="10.8" fill="#000" text-anchor="middle" >3900</text>
<text xml:space="preserve" x="395.875" y="447" font-family='"Liberation Sans", sans-serif' font-size="10.8" fill="#000" text-anchor="middle" >4000</text>
<text xml:space="preserve" x="454.71000000000004" y="447" font-family='"Liberation Sans", sans-serif' font-size="10.8" fill="#000" text-anchor="middle" >4100</text>
<text xml:space="preserve" x="513.5450000000001" y="447" font-family='"Liberation Sans", sans-serif' font-size="10.8" fill="#000" text-anchor="middle" >4200</text>
<text xml:space="preserve" x="572.38" y="447" font-family='"Liberation Sans", sans-serif' font-size="10.8" fill="#000" text-anchor="middle" >4300</text>
<text xml:space="preserve" x="631.215" y="447" font-family='"Liberation Sans", sans-serif' font-size="10.8" fill="#000" text-anchor="middle" >4400</text>
<text xml:space="preserve" x="690.0500000000001" y="447" font-family='"Liberation Sans", sans-serif' font-size="10.8" fill="#000" text-anchor="middle" >4500</text>
<text xml:space="preserve" x="748.8850000000001" y="447" font-family='"Liberation Sans", sans-serif' font-size="10.8" fill="#000" text-anchor="middle" >4600</text>
<text xml:space="preserve" x="807.7200000000001" y="447" font-family='"Liberation Sans", sans-serif' font-size="10.8" fill="#000" text-anchor="middle" >4700</text>
<text xml:space="preserve" x="866.5550000000001" y="447" font-family='"Liberation Sans", sans-serif' font-size="10.8" fill="#000" text-anchor="middle" >4800</text>
<text xml:space="preserve" x="925.3900000000001" y="447" font-family='"Liberation Sans", sans-serif' font-size="10.8" fill="#000" text-anchor="middle" >4900</text>
<text xml:space="preserve" x="984.2250000000001" y="447" font-family='"Liberation Sans", sans-serif' font-size="10.8" fill="#000" text-anchor="middle" >5000</text>
<text xml:space="preserve" x="1043.06" y="447" font-family='"Liberation Sans", sans-serif' font-size="10.8" fill="#000" text-anchor="middle" >5100</text>
<text xml:space="preserve" x="1101.895" y="447" font-family='"Liberation Sans", sans-serif' font-size="10.8" fill="#000" text-anchor="middle" >5200</text>
<text xml:space="preserve" x="1160.73" y="447" font-family='"Liberation Sans", sans-serif' font-size="10.8" fill="#000" text-anchor="middle" >5300</text>
<text xml:space="preserve" x="1219.565" y="447" font-family='"Liberation Sans", sans-serif' font-size="10.8" fill="#000" text-anchor="middle" >5400</text>
<text xml:space="preserve" x="1278.4" y="447" font-family='"Liberation Sans", sans-serif' font-size="10.8" fill="#000" text-anchor="middle" >5500</text>
<path d="M101.7 421.5h-3.5M101.7 395.1h-3.5M101.7 368.8h-3.5M101.7 432v3.5M160.5 432v3.5M219.4 432v3.5M278.2 432v3.5M337.0 432v3.5M395.9 432v3.5M454.7 432v3.5M513.5 432v3.5M572.4 432v3.5M631.2 432v3.5M690.1 432v3.5M748.9 432v3.5M807.7 432v3.5M866.6 432v3.5M925.4 432v3.5M984.2 432v3.5M1043.1 432v3.5M1101.9 432v3.5M1160.7 432v3.5M1219.6 432v3.5M1278.4 432v3.5" stroke="#000" stroke-width="0.8"/>
<text xml:space="preserve" x="102.5" y="345.5" font-family='"Liberation Sans", sans-serif' font-size="10.8" fill="#000" >e</text>
<text xml:space="preserve" x="109" y="339.5" font-family='"Liberation Sans", sans-serif' font-size="7" fill="#000" >−17</text>
<text xml:space="preserve" x="122" y="345.5" font-family='"Liberation Sans", sans-serif' font-size="10.8" fill="#000" >x2Å</text>
<text x="0" y="0" font-family='"Liberation Sans", sans-serif' font-size="10" fill="#8a2be2" textLength="18.3" lengthAdjust="spacingAndGlyphs" transform="translate(172.7,321.0) rotate(90)">SiIV</text>
<path d="M172.8 347.0q0 -2 1.5 -2h1.2q0.8 0 0.8 -1.2q0 1.2 0.8 1.2h1.2q1.5 0 1.5 2" stroke="#8a2be2" stroke-width="0.9" fill="none"/>
<text x="0" y="0" font-family='"Liberation Sans", sans-serif' font-size="10" fill="#87ceeb" textLength="12.6" lengthAdjust="spacingAndGlyphs" transform="translate(261.3,323.3) rotate(90)">OII</text>
<path d="M261.4 347.0q0 -2 1.5 -2h1.2q0.8 0 0.8 -1.2q0 1.2 0.8 1.2h1.2q1.5 0 1.5 2" stroke="#87ceeb" stroke-width="0.9" fill="none"/>
<text x="0" y="0" font-family='"Liberation Sans", sans-serif' font-size="10" fill="#ffa500" textLength="16.0" lengthAdjust="spacingAndGlyphs" transform="translate(273.6,319.9) rotate(90)">CIV</text>
<path d="M273.7 347.0q0 -2 1.5 -2h1.2q0.8 0 0.8 -1.2q0 1.2 0.8 1.2h1.2q1.5 0 1.5 2" stroke="#ffa500" stroke-width="0.9" fill="none"/>
<text x="0" y="0" font-family='"Liberation Sans", sans-serif' font-size="10" fill="#87ceeb" textLength="12.6" lengthAdjust="spacingAndGlyphs" transform="translate(281.0,323.3) rotate(90)">OII</text>
<path d="M281.1 347.0q0 -2 1.5 -2h1.2q0.8 0 0.8 -1.2q0 1.2 0.8 1.2h1.2q1.5 0 1.5 2" stroke="#87ceeb" stroke-width="0.9" fill="none"/>
<text x="0" y="0" font-family='"Liberation Sans", sans-serif' font-size="10" fill="#ff0000" textLength="12.8" lengthAdjust="spacingAndGlyphs" transform="translate(453.4,320.0) rotate(90)">NV</text>
<path d="M453.5 347.0q0 -2 1.5 -2h1.2q0.8 0 0.8 -1.2q0 1.2 0.8 1.2h1.2q1.5 0 1.5 2" stroke="#ff0000" stroke-width="0.9" fill="none"/>
<text x="0" y="0" font-family='"Liberation Sans", sans-serif' font-size="10" fill="#ff0000" textLength="14.0" lengthAdjust="spacingAndGlyphs" transform="translate(496.7,325.0) rotate(90)">SiII</text>
<path d="M496.8 347.0q0 -2 1.5 -2h1.2q0.8 0 0.8 -1.2q0 1.2 0.8 1.2h1.2q1.5 0 1.5 2" stroke="#ff0000" stroke-width="0.9" fill="none"/>
<text x="0" y="0" font-family='"Liberation Sans", sans-serif' font-size="10" fill="#8a2be2" textLength="18.2" lengthAdjust="spacingAndGlyphs" transform="translate(543.8,320.8) rotate(90)">HeII</text>
<path d="M543.9 347.0q0 -2 1.5 -2h1.2q0.8 0 0.8 -1.2q0 1.2 0.8 1.2h1.2q1.5 0 1.5 2" stroke="#8a2be2" stroke-width="0.9" fill="none"/>
<text x="0" y="0" font-family='"Liberation Sans", sans-serif' font-size="10" fill="#87ceeb" textLength="12.0" lengthAdjust="spacingAndGlyphs" transform="translate(625.3,328.0) rotate(90)">Hγ</text>
<path d="M625.4 347.0q0 -2 1.5 -2h1.2q0.8 0 0.8 -1.2q0 1.2 0.8 1.2h1.2q1.5 0 1.5 2" stroke="#87ceeb" stroke-width="0.9" fill="none"/>
<text x="0" y="0" font-family='"Liberation Sans", sans-serif' font-size="10" fill="#87ceeb" textLength="12.0" lengthAdjust="spacingAndGlyphs" transform="translate(648.4,328.0) rotate(90)">Hγ</text>
<path d="M648.5 347.0q0 -2 1.5 -2h1.2q0.8 0 0.8 -1.2q0 1.2 0.8 1.2h1.2q1.5 0 1.5 2" stroke="#87ceeb" stroke-width="0.9" fill="none"/>
<text x="0" y="0" font-family='"Liberation Sans", sans-serif' font-size="10" fill="#ff0000" textLength="18.0" lengthAdjust="spacingAndGlyphs" transform="translate(758.3,321.0) rotate(90)">SiIV</text>
<path d="M758.4 347.0q0 -2 1.5 -2h1.2q0.8 0 0.8 -1.2q0 1.2 0.8 1.2h1.2q1.5 0 1.5 2" stroke="#ff0000" stroke-width="0.9" fill="none"/>
<text x="0" y="0" font-family='"Liberation Sans", sans-serif' font-size="10" fill="#ffa500" textLength="15.7" lengthAdjust="spacingAndGlyphs" transform="translate(791.0,282.3) rotate(90)">CIII</text>
<path d="M791.1 305.0q0 -2 1.5 -2h1.2q0.8 0 0.8 -1.2q0 1.2 0.8 1.2h1.2q1.5 0 1.5 2" stroke="#ffa500" stroke-width="0.9" fill="none"/>
<text x="0" y="0" font-family='"Liberation Sans", sans-serif' font-size="10" fill="#008000" textLength="14.8" lengthAdjust="spacingAndGlyphs" transform="translate(792.3,327.0) rotate(90)">Hγ</text>
<path d="M792.4 347.0q0 -2 1.5 -2h1.2q0.8 0 0.8 -1.2q0 1.2 0.8 1.2h1.2q1.5 0 1.5 2" stroke="#008000" stroke-width="0.9" fill="none"/>
<text x="0" y="0" font-family='"Liberation Sans", sans-serif' font-size="10" fill="#800080" textLength="12.1" lengthAdjust="spacingAndGlyphs" transform="translate(918.4,323.6) rotate(90)">CII</text>
<path d="M918.5 347.0q0 -2 1.5 -2h1.2q0.8 0 0.8 -1.2q0 1.2 0.8 1.2h1.2q1.5 0 1.5 2" stroke="#800080" stroke-width="0.9" fill="none"/>
<text x="0" y="0" font-family='"Liberation Sans", sans-serif' font-size="10" fill="#87ceeb" textLength="13.0" lengthAdjust="spacingAndGlyphs" transform="translate(935.5,328.0) rotate(90)">Hβ</text>
<path d="M935.6 347.0q0 -2 1.5 -2h1.2q0.8 0 0.8 -1.2q0 1.2 0.8 1.2h1.2q1.5 0 1.5 2" stroke="#87ceeb" stroke-width="0.9" fill="none"/>
<text x="0" y="0" font-family='"Liberation Sans", sans-serif' font-size="10" fill="#8a2be2" textLength="15.4" lengthAdjust="spacingAndGlyphs" transform="translate(952.4,323.6) rotate(90)">CIII</text>
<path d="M952.5 347.0q0 -2 1.5 -2h1.2q0.8 0 0.8 -1.2q0 1.2 0.8 1.2h1.2q1.5 0 1.5 2" stroke="#8a2be2" stroke-width="0.9" fill="none"/>
<text x="0" y="0" font-family='"Liberation Sans", sans-serif' font-size="10" fill="#87ceeb" textLength="13.0" lengthAdjust="spacingAndGlyphs" transform="translate(961.0,327.0) rotate(90)">Hβ</text>
<path d="M961.1 347.0q0 -2 1.5 -2h1.2q0.8 0 0.8 -1.2q0 1.2 0.8 1.2h1.2q1.5 0 1.5 2" stroke="#87ceeb" stroke-width="0.9" fill="none"/>
<text x="0" y="0" font-family='"Liberation Sans", sans-serif' font-size="10" fill="#87ceeb" textLength="15.4" lengthAdjust="spacingAndGlyphs" transform="translate(993.8,323.6) rotate(90)">OIII</text>
<path d="M993.9 347.0q0 -2 1.5 -2h1.2q0.8 0 0.8 -1.2q0 1.2 0.8 1.2h1.2q1.5 0 1.5 2" stroke="#87ceeb" stroke-width="0.9" fill="none"/>
<text x="0" y="0" font-family='"Liberation Sans", sans-serif' font-size="10" fill="#87ceeb" textLength="17.0" lengthAdjust="spacingAndGlyphs" transform="translate(1022.9,281.0) rotate(90)">OIII</text>
<path d="M1023.0 305.0q0 -2 1.5 -2h1.2q0.8 0 0.8 -1.2q0 1.2 0.8 1.2h1.2q1.5 0 1.5 2" stroke="#87ceeb" stroke-width="0.9" fill="none"/>
<text x="0" y="0" font-family='"Liberation Sans", sans-serif' font-size="10" fill="#87ceeb" textLength="16.0" lengthAdjust="spacingAndGlyphs" transform="translate(1020.4,323.0) rotate(90)">OIII</text>
<path d="M1020.5 347.0q0 -2 1.5 -2h1.2q0.8 0 0.8 -1.2q0 1.2 0.8 1.2h1.2q1.5 0 1.5 2" stroke="#87ceeb" stroke-width="0.9" fill="none"/>
<text x="0" y="0" font-family='"Liberation Sans", sans-serif' font-size="10" fill="#87ceeb" textLength="17.0" lengthAdjust="spacingAndGlyphs" transform="translate(1048.4,281.0) rotate(90)">OIII</text>
<path d="M1048.5 305.0q0 -2 1.5 -2h1.2q0.8 0 0.8 -1.2q0 1.2 0.8 1.2h1.2q1.5 0 1.5 2" stroke="#87ceeb" stroke-width="0.9" fill="none"/>
<text x="0" y="0" font-family='"Liberation Sans", sans-serif' font-size="10" fill="#ff0000" textLength="15.7" lengthAdjust="spacingAndGlyphs" transform="translate(1053.4,320.0) rotate(90)">CIV</text>
<path d="M1053.5 347.0q0 -2 1.5 -2h1.2q0.8 0 0.8 -1.2q0 1.2 0.8 1.2h1.2q1.5 0 1.5 2" stroke="#ff0000" stroke-width="0.9" fill="none"/>
<text x="0" y="0" font-family='"Liberation Sans", sans-serif' font-size="10" fill="#008000" textLength="12.0" lengthAdjust="spacingAndGlyphs" transform="translate(1122.7,328.0) rotate(90)">Hβ</text>
<path d="M1122.8 347.0q0 -2 1.5 -2h1.2q0.8 0 0.8 -1.2q0 1.2 0.8 1.2h1.2q1.5 0 1.5 2" stroke="#008000" stroke-width="0.9" fill="none"/>
<text x="0" y="0" font-family='"Liberation Sans", sans-serif' font-size="10" fill="#ff00ff" textLength="12.0" lengthAdjust="spacingAndGlyphs" transform="translate(1189.0,281.3) rotate(90)">OII</text>
<path d="M1189.1 305.0q0 -2 1.5 -2h1.2q0.8 0 0.8 -1.2q0 1.2 0.8 1.2h1.2q1.5 0 1.5 2" stroke="#ff00ff" stroke-width="0.9" fill="none"/>
<text x="0" y="0" font-family='"Liberation Sans", sans-serif' font-size="10" fill="#008000" textLength="15.4" lengthAdjust="spacingAndGlyphs" transform="translate(1185.0,323.6) rotate(90)">OIII</text>
<path d="M1185.1 347.0q0 -2 1.5 -2h1.2q0.8 0 0.8 -1.2q0 1.2 0.8 1.2h1.2q1.5 0 1.5 2" stroke="#008000" stroke-width="0.9" fill="none"/>
<text x="0" y="0" font-family='"Liberation Sans", sans-serif' font-size="10" fill="#008000" textLength="15.4" lengthAdjust="spacingAndGlyphs" transform="translate(1215.3,323.6) rotate(90)">OIII</text>
<path d="M1215.4 347.0q0 -2 1.5 -2h1.2q0.8 0 0.8 -1.2q0 1.2 0.8 1.2h1.2q1.5 0 1.5 2" stroke="#008000" stroke-width="0.9" fill="none"/>
<text x="0" y="0" font-family='"Liberation Sans", sans-serif' font-size="10" fill="#ff0000" textLength="17.7" lengthAdjust="spacingAndGlyphs" transform="translate(1230.1,321.3) rotate(90)">HeII</text>
<path d="M1230.2 347.0q0 -2 1.5 -2h1.2q0.8 0 0.8 -1.2q0 1.2 0.8 1.2h1.2q1.5 0 1.5 2" stroke="#ff0000" stroke-width="0.9" fill="none"/>
<rect x="480" y="450" width="17" height="6.5" fill="#ff0000"/>
<text xml:space="preserve" x="503.5" y="456.2" font-family='"Liberation Sans", sans-serif' font-size="8.5" fill="#000" >Lyα</text>
<rect x="534" y="450" width="17" height="6.5" fill="#008000"/>
<text xml:space="preserve" x="557.5" y="456.2" font-family='"Liberation Sans", sans-serif' font-size="8.5" fill="#000" >OII</text>
<rect x="586.3" y="450" width="17" height="6.5" fill="#8a2be2"/>
<text xml:space="preserve" x="609.8" y="456.2" font-family='"Liberation Sans", sans-serif' font-size="8.5" fill="#000" >CIV</text>
<rect x="641.7" y="450" width="17" height="6.5" fill="#800080"/>
<text xml:space="preserve" x="665.2" y="456.2" font-family='"Liberation Sans", sans-serif' font-size="8.5" fill="#000" >CIII</text>
<rect x="693.4" y="450" width="17" height="6.5" fill="#ff00ff"/>
<text xml:space="preserve" x="716.9" y="456.2" font-family='"Liberation Sans", sans-serif' font-size="8.5" fill="#000" >MgII</text>
<rect x="749.6" y="450" width="17" height="6.5" fill="#ffa500"/>
<text xml:space="preserve" x="773.1" y="456.2" font-family='"Liberation Sans", sans-serif' font-size="8.5" fill="#000" >HeII</text>
<rect x="804" y="450" width="17" height="6.5" fill="#87ceeb"/>
<text xml:space="preserve" x="827.5" y="456.2" font-family='"Liberation Sans", sans-serif' font-size="8.5" fill="#000" >(K)CaII</text>
<rect x="869.6" y="450" width="17" height="6.5" fill="#87ceeb"/>
<text xml:space="preserve" x="893.1" y="456.2" font-family='"Liberation Sans", sans-serif' font-size="8.5" fill="#000" >(H)CaII</text>
<text xml:space="preserve" x="70" y="499" font-family='"Liberation Mono", monospace' font-size="13.8" fill="#000" textLength="521" lengthAdjust="spacingAndGlyphs">HSC-DEX : Possible Matches = 0 (within +/- 3")  P(LAE)/P(OII): 0.14</text>
<text xml:space="preserve" x="593.6" y="493" font-family='"Liberation Sans", sans-serif' font-size="8.5" fill="#000" textLength="25.5" lengthAdjust="spacingAndGlyphs" >0.282</text>
<text xml:space="preserve" x="593.6" y="501.8" font-family='"Liberation Sans", sans-serif' font-size="8.5" fill="#000" textLength="25.5" lengthAdjust="spacingAndGlyphs" >0.081</text>
<text xml:space="preserve" x="621" y="499" font-family='"Liberation Mono", monospace' font-size="13.8" fill="#000" textLength="31" lengthAdjust="spacingAndGlyphs"> (r)</text>
<text xml:space="preserve" x="70" y="888" font-family='"Liberation Mono", monospace' font-size="13.8" fill="#000" textLength="242" lengthAdjust="spacingAndGlyphs">No matching targets in catalog.</text>
<text xml:space="preserve" x="70" y="903" font-family='"Liberation Mono", monospace' font-size="13.8" fill="#000" textLength="187.5" lengthAdjust="spacingAndGlyphs">Row intentionally blank.</text>
<g clip-path="url(#ax0)">
<rect x="69.9" y="532.5" width="148.1" height="148.1" fill="#e9e9e9"/>
<rect x="69.9" y="532.5" width="148.1" height="148.1" fill="#888" filter="url(#nf16)"/>
<ellipse cx="111.8" cy="613.8" rx="29.4" ry="31.0" fill="url(#halo1)"/>
<ellipse cx="111.8" cy="613.8" rx="16.3" ry="18.5" fill="#000"/>
<g fill="none" stroke="#606060" stroke-width="1.15"><circle cx="128.8" cy="555.2" r="12.4"/><circle cx="153.3" cy="551.1" r="12.4"/><circle cx="168.9" cy="568.6" r="12.4"/><circle cx="145.4" cy="573.2" r="12.4"/><circle cx="122.6" cy="578.7" r="12.4"/><circle cx="98.1" cy="582.6" r="12.4"/><circle cx="185.6" cy="585.1" r="12.4"/><circle cx="178.4" cy="608.6" r="12.4"/><circle cx="91.1" cy="607.1" r="12.4"/><circle cx="113.1" cy="604.0" r="12.4"/><circle cx="107.5" cy="622.8" r="12.4"/><circle cx="194.9" cy="626.1" r="12.4"/><circle cx="170.6" cy="632.3" r="12.4"/><circle cx="147.7" cy="637.8" r="12.4"/><circle cx="124.9" cy="642.6" r="12.4"/><circle cx="164.2" cy="654.3" r="12.4"/><circle cx="140.7" cy="660.7" r="12.4"/></g>
<circle cx="137.4" cy="596.0" r="12.4" fill="none" stroke="#00e000" stroke-width="1.6"/>
<circle cx="161.9" cy="591.3" r="12.4" fill="none" stroke="#ffa500" stroke-width="1.6"/>
<circle cx="154.9" cy="613.3" r="12.4" fill="none" stroke="#0000e0" stroke-width="1.6"/>
<circle cx="131.2" cy="619.7" r="12.4" fill="none" stroke="#e00000" stroke-width="1.6"/>
<rect x="94.8" y="557.3" width="98.0" height="98.0" fill="none" stroke="#ff2020" stroke-width="1.3"/>
<text xml:space="preserve" x="143.8" y="546.3523999999999" font-family='"Liberation Sans", sans-serif' font-size="11.5" fill="#ff2020" text-anchor="middle" >N</text>
<text xml:space="preserve" x="79.29650000000001" y="610.3" font-family='"Liberation Sans", sans-serif' font-size="11" fill="#ff2020" text-anchor="middle" >E</text>
<path d="M140.3 606.3h7M143.8 602.8v7" stroke="#ff2020" stroke-width="1.3"/>
</g>
<text xml:space="preserve" x="78.48000000000002" y="696.8000000000001" font-family='"Liberation Sans", sans-serif' font-size="11.2" fill="#000" text-anchor="middle" >−4</text>
<text xml:space="preserve" x="64.4" y="675.8199999999999" font-family='"Liberation Sans", sans-serif' font-size="11.2" fill="#000" text-anchor="end" >−4</text>
<text xml:space="preserve" x="111.14000000000001" y="696.8000000000001" font-family='"Liberation Sans", sans-serif' font-size="11.2" fill="#000" text-anchor="middle" >−2</text>
<text xml:space="preserve" x="64.4" y="643.16" font-family='"Liberation Sans", sans-serif' font-size="11.2" fill="#000" text-anchor="end" >−2</text>
<text xml:space="preserve" x="143.8" y="696.8000000000001" font-family='"Liberation Sans", sans-serif' font-size="11.2" fill="#000" text-anchor="middle" >0</text>
<text xml:space="preserve" x="64.4" y="610.5" font-family='"Liberation Sans", sans-serif' font-size="11.2" fill="#000" text-anchor="end" >0</text>
<text xml:space="preserve" x="176.46" y="696.8000000000001" font-family='"Liberation Sans", sans-serif' font-size="11.2" fill="#000" text-anchor="middle" >2</text>
<text xml:space="preserve" x="64.4" y="577.84" font-family='"Liberation Sans", sans-serif' font-size="11.2" fill="#000" text-anchor="end" >2</text>
<text xml:space="preserve" x="209.12" y="696.8000000000001" font-family='"Liberation Sans", sans-serif' font-size="11.2" fill="#000" text-anchor="middle" >4</text>
<text xml:space="preserve" x="64.4" y="545.1800000000001" font-family='"Liberation Sans", sans-serif' font-size="11.2" fill="#000" text-anchor="end" >4</text>
<path d="M78.5 680.6v3.5M69.9 671.6h-3.5M111.1 680.6v3.5M69.9 639.0h-3.5M143.8 680.6v3.5M69.9 606.3h-3.5M176.5 680.6v3.5M69.9 573.6h-3.5M209.1 680.6v3.5M69.9 541.0h-3.5" stroke="#000" stroke-width="0.9"/>
<rect x="69.9" y="532.5" width="148.1" height="148.1" fill="none" stroke="#222" stroke-width="1"/>
<text xml:space="preserve" x="143.8" y="526" font-family='"Liberation Sans", sans-serif' font-size="14.2" fill="#000" text-anchor="middle" >Fiber Positions</text>
<text xml:space="preserve" x="143.8" y="706.6" font-family='"Liberation Sans", sans-serif' font-size="12.5" fill="#000" text-anchor="middle" >arcsecs</text>
<g clip-path="url(#ax1)">
<rect x="255.3" y="532.5" width="148.1" height="148.1" fill="#30698e"/>
<g filter="url(#blur3)">
<polygon points="240.5,517.7 314.5,517.7 324.9,541.4 348.6,554.7 373.8,568.0 382.7,588.8 367.9,594.7 347.1,581.4 321.9,569.5 299.7,563.6 277.5,559.2 240.5,562.1" fill="#2a9c87" />
<polygon points="255.3,517.7 292.3,517.7 299.7,544.3 329.4,553.2 361.9,568.0 370.8,582.9 359.0,581.4 329.4,565.1 299.7,556.2 270.1,550.3 240.5,547.3" fill="#3bae7f" />
<polygon points="280.5,517.7 329.4,517.7 324.9,541.4 284.9,542.9" fill="#45307e" />
<polygon points="347.1,517.7 384.1,517.7 384.1,562.1 418.2,571.0 418.2,618.4 367.9,614.0 376.7,582.9 366.4,562.1 347.1,553.2" fill="#450b5e" />
<polygon points="384.1,517.7 418.2,517.7 418.2,569.5 384.1,562.1" fill="#2b8b8c" />
<polygon points="329.4,576.9 353.0,582.9 367.9,599.1 359.0,611.0 336.8,600.6 329.4,591.7" fill="#46287a" />
<polygon points="332.3,606.5 373.8,614.0 381.2,645.1 344.2,648.0 329.4,628.8" fill="#3d4b8a" />
<polygon points="344.2,645.1 418.2,636.2 418.2,695.4 359.0,695.4" fill="#461260" />
<polygon points="382.7,614.0 418.2,615.4 418.2,639.1 382.7,639.1" fill="#31668e" />
<polygon points="240.5,612.5 273.1,612.5 273.1,640.6 240.5,640.6" fill="#3d2470" />
<polygon points="240.5,553.2 270.1,556.2 270.1,576.9 240.5,576.9" fill="#3f4a89" />
<polygon points="240.5,645.1 344.2,639.1 361.9,695.4 240.5,695.4" fill="#26818e" />
<polygon points="273.1,651.0 321.9,648.0 329.4,674.7 284.9,677.6" fill="#21928c" />
<polygon points="307.1,562.1 329.4,571.0 329.4,594.7 308.6,585.8" fill="#2c7c8d" />
</g>
<polygon points="279.0,580.6 299.7,576.2 308.6,581.4 332.3,606.5 330.1,616.9 323.4,634.7 292.3,645.1 279.0,646.5 272.3,630.2 274.6,597.7" fill="#5ec962" />
<polygon points="280.5,583.3 299.9,579.0 307.4,583.3 330.2,607.0 328.5,615.4 321.8,632.3 291.4,642.5 280.5,644.2 274.7,628.9 276.3,598.6" fill="#fde725" />
<rect x="280.1" y="557.3" width="98.0" height="98.0" fill="none" stroke="#ff2020" stroke-width="1.3"/>
<text xml:space="preserve" x="329.1" y="546.3523999999999" font-family='"Liberation Sans", sans-serif' font-size="11.5" fill="#ff2020" text-anchor="middle" >N</text>
<text xml:space="preserve" x="264.5965" y="610.3" font-family='"Liberation Sans", sans-serif' font-size="11" fill="#ff2020" text-anchor="middle" >E</text>
<path d="M291.5 606.3H321.8M336.4 606.3H366.7M329.1 568.7V599.0M329.1 613.6V643.9" stroke="#ff2020" stroke-width="1.4"/>
</g>
<text xml:space="preserve" x="263.78000000000003" y="696.8000000000001" font-family='"Liberation Sans", sans-serif' font-size="11.2" fill="#000" text-anchor="middle" >−4</text>
<text xml:space="preserve" x="249.8" y="675.8199999999999" font-family='"Liberation Sans", sans-serif' font-size="11.2" fill="#000" text-anchor="end" >−4</text>
<text xml:space="preserve" x="296.44000000000005" y="696.8000000000001" font-family='"Liberation Sans", sans-serif' font-size="11.2" fill="#000" text-anchor="middle" >−2</text>
<text xml:space="preserve" x="249.8" y="643.16" font-family='"Liberation Sans", sans-serif' font-size="11.2" fill="#000" text-anchor="end" >−2</text>
<text xml:space="preserve" x="329.1" y="696.8000000000001" font-family='"Liberation Sans", sans-serif' font-size="11.2" fill="#000" text-anchor="middle" >0</text>
<text xml:space="preserve" x="249.8" y="610.5" font-family='"Liberation Sans", sans-serif' font-size="11.2" fill="#000" text-anchor="end" >0</text>
<text xml:space="preserve" x="361.76" y="696.8000000000001" font-family='"Liberation Sans", sans-serif' font-size="11.2" fill="#000" text-anchor="middle" >2</text>
<text xml:space="preserve" x="249.8" y="577.84" font-family='"Liberation Sans", sans-serif' font-size="11.2" fill="#000" text-anchor="end" >2</text>
<text xml:space="preserve" x="394.42" y="696.8000000000001" font-family='"Liberation Sans", sans-serif' font-size="11.2" fill="#000" text-anchor="middle" >4</text>
<text xml:space="preserve" x="249.8" y="545.1800000000001" font-family='"Liberation Sans", sans-serif' font-size="11.2" fill="#000" text-anchor="end" >4</text>
<path d="M263.8 680.6v3.5M255.3 671.6h-3.5M296.4 680.6v3.5M255.3 639.0h-3.5M329.1 680.6v3.5M255.3 606.3h-3.5M361.8 680.6v3.5M255.3 573.6h-3.5M394.4 680.6v3.5M255.3 541.0h-3.5" stroke="#000" stroke-width="0.9"/>
<rect x="255.3" y="532.5" width="148.1" height="148.1" fill="none" stroke="#222" stroke-width="1"/>
<text xml:space="preserve" x="329.1" y="526" font-family='"Liberation Sans", sans-serif' font-size="14.2" fill="#000" text-anchor="middle" >Lineflux Map</text>
<text xml:space="preserve" x="329.1" y="706.6" font-family='"Liberation Sans", sans-serif' font-size="12.5" fill="#000" text-anchor="middle" >s/b: 1.54 +/- 0.080</text>
<g clip-path="url(#ax2)">
<rect x="440.4" y="532.5" width="148.1" height="148.1" fill="#e9e9e9"/>
<rect x="440.4" y="532.5" width="148.1" height="148.1" fill="#888" filter="url(#nf17)"/>
<circle cx="481.6" cy="614.1" r="29.4" fill="url(#halo3)"/>
<circle cx="481.6" cy="614.1" r="18.3" fill="#000"/>
<circle cx="481.6" cy="614.1" r="19.1" fill="none" stroke="#e0b000" stroke-width="1.8"/>
<rect x="465.7" y="557.3" width="98.0" height="98.0" fill="none" stroke="#ff2020" stroke-width="1.3"/>
<text xml:space="preserve" x="514.7" y="546.3523999999999" font-family='"Liberation Sans", sans-serif' font-size="11.5" fill="#ff2020" text-anchor="middle" >N</text>
<text xml:space="preserve" x="450.1965" y="610.3" font-family='"Liberation Sans", sans-serif' font-size="11" fill="#ff2020" text-anchor="middle" >E</text>
<path d="M477.1 606.3H507.4M522.0 606.3H552.3M514.7 568.7V599.0M514.7 613.6V643.9" stroke="#ff2020" stroke-width="1.4"/>
</g>
<text xml:space="preserve" x="449.38000000000005" y="696.8000000000001" font-family='"Liberation Sans", sans-serif' font-size="11.2" fill="#000" text-anchor="middle" >−4</text>
<text xml:space="preserve" x="434.9" y="675.8199999999999" font-family='"Liberation Sans", sans-serif' font-size="11.2" fill="#000" text-anchor="end" >−4</text>
<text xml:space="preserve" x="482.0400000000001" y="696.8000000000001" font-family='"Liberation Sans", sans-serif' font-size="11.2" fill="#000" text-anchor="middle" >−2</text>
<text xml:space="preserve" x="434.9" y="643.16" font-family='"Liberation Sans", sans-serif' font-size="11.2" fill="#000" text-anchor="end" >−2</text>
<text xml:space="preserve" x="514.7" y="696.8000000000001" font-family='"Liberation Sans", sans-serif' font-size="11.2" fill="#000" text-anchor="middle" >0</text>
<text xml:space="preserve" x="434.9" y="610.5" font-family='"Liberation Sans", sans-serif' font-size="11.2" fill="#000" text-anchor="end" >0</text>
<text xml:space="preserve" x="547.36" y="696.8000000000001" font-family='"Liberation Sans", sans-serif' font-size="11.2" fill="#000" text-anchor="middle" >2</text>
<text xml:space="preserve" x="434.9" y="577.84" font-family='"Liberation Sans", sans-serif' font-size="11.2" fill="#000" text-anchor="end" >2</text>
<text xml:space="preserve" x="580.02" y="696.8000000000001" font-family='"Liberation Sans", sans-serif' font-size="11.2" fill="#000" text-anchor="middle" >4</text>
<text xml:space="preserve" x="434.9" y="545.1800000000001" font-family='"Liberation Sans", sans-serif' font-size="11.2" fill="#000" text-anchor="end" >4</text>
<path d="M449.4 680.6v3.5M440.4 671.6h-3.5M482.0 680.6v3.5M440.4 639.0h-3.5M514.7 680.6v3.5M440.4 606.3h-3.5M547.4 680.6v3.5M440.4 573.6h-3.5M580.0 680.6v3.5M440.4 541.0h-3.5" stroke="#000" stroke-width="0.9"/>
<rect x="440.4" y="532.5" width="148.1" height="148.1" fill="none" stroke="#222" stroke-width="1"/>
<text xml:space="preserve" x="514.7" y="526" font-family='"Liberation Sans", sans-serif' font-size="14.2" fill="#000" text-anchor="middle" >HSC(26.2) r</text>
<text xml:space="preserve" x="514.7" y="705.8" font-family='"Liberation Sans", sans-serif' font-size="12.5" fill="#000" text-anchor="middle" >m:18.5  re:1.2"  s:2.1"</text>
<text xml:space="preserve" x="514.7" y="718.5" font-family='"Liberation Sans", sans-serif' font-size="11.8" fill="#000" text-anchor="middle" >EWr: 0, PLAE: 0.14</text>
</svg></body></html>
